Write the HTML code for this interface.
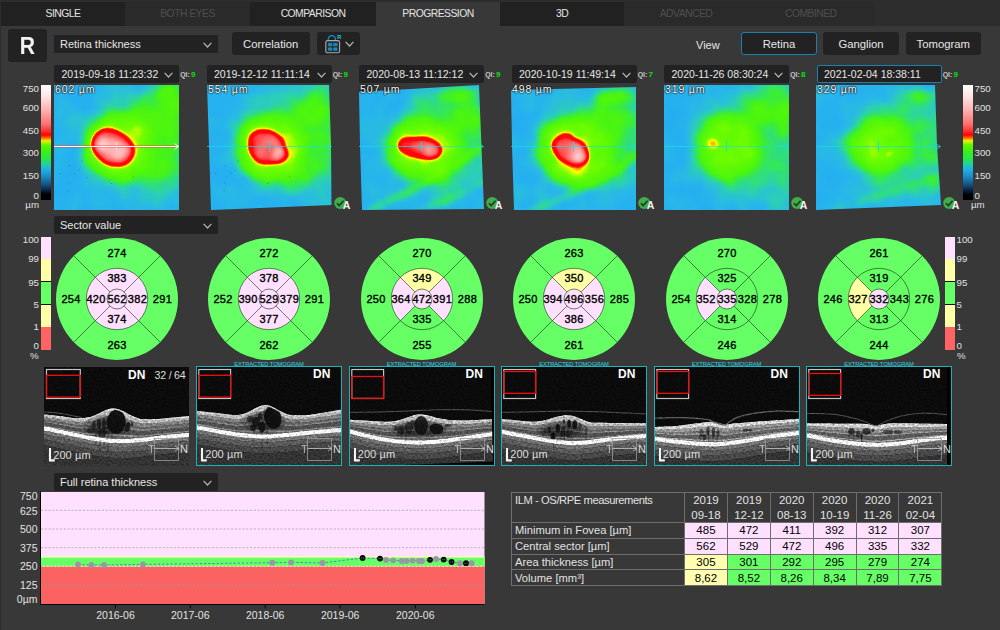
<!DOCTYPE html>
<html lang="en"><head><meta charset="utf-8"><title>Progression</title>
<style>
html,body{margin:0;padding:0}
body{width:1000px;height:630px;background:#383838;position:relative;overflow:hidden;font-family:'Liberation Sans', sans-serif;color:#e6e6e6;font-size:11px}
.a{position:absolute}
.tab{position:absolute;top:2px;height:24px;line-height:24px;text-align:center;font-size:10.4px;background:#212121;color:#e4e4e4;letter-spacing:-.55px}
.tab.dis{background:#2a2a2a;color:#4e4e4e}
.tab.act{background:#383838}
.dd{position:absolute;background:#222222;border-radius:2px;height:18px;line-height:18px;font-size:11px;color:#e6e6e6;box-sizing:border-box;padding-left:6px;white-space:nowrap}
.btn{position:absolute;background:#222222;border-radius:3px;height:23px;line-height:25px;font-size:11.3px;color:#e6e6e6;text-align:center;box-sizing:border-box;white-space:nowrap}
.chev{position:absolute;width:9px;height:6px}
.qi{position:absolute;font-size:6.9px;font-weight:bold;color:#c8c8c8;top:70px;line-height:9px;white-space:nowrap}
.qi b{color:#00e800;font-size:8px;margin-left:1.2px}
.um{position:absolute;top:84px;font-size:10.5px;line-height:11px;color:#fff;text-shadow:0 0 2px #000,0 0 1px #000,0 0 1px #000;white-space:nowrap;letter-spacing:.85px}
.sl{position:absolute;font-size:9.7px;line-height:10px;color:#e0e0e0;white-space:nowrap}
.ext{position:absolute;top:360.5px;width:146px;text-align:center;font-size:5.8px;line-height:7px;color:#27d6e2;white-space:nowrap;letter-spacing:-.1px}
.tomo{position:absolute;top:366px;height:100px;width:146px;box-sizing:border-box;background:#000;overflow:hidden}
.tomo.ex{border:1px solid #17b4bd}
.dn{position:absolute;font-weight:bold;font-size:12px;line-height:12px;color:#fff;top:2px}
.sc{position:absolute;font-size:11px;line-height:12px;color:#dedede;white-space:nowrap}
table{border-collapse:collapse;position:absolute;left:511px;top:492px;font-size:11.2px;color:#e2e2e2}
td{border:1px solid #6e6e6e;padding:0 0 0 3px;height:14.75px;line-height:14px;white-space:nowrap}
td.c{text-align:center;padding:0;color:#000;width:41.9px;font-size:11.5px}
td.h{text-align:center;padding:0;height:29px;line-height:14.5px;width:41.9px;vertical-align:top;font-size:11.5px}
td.p{background:#ffe1ff} td.y{background:#ffffaf} td.g{background:#66ff66}
</style></head><body>

<div class="a" style="left:0;top:0;width:1000px;height:25.5px;background:#2d2d2d"></div>
<div class="a" style="left:0;top:0;width:1.2px;height:630px;background:#2d2d2d"></div>
<div class="tab " style="left:1px;width:124px">SINGLE</div>
<div class="tab dis" style="left:125px;width:125px">BOTH EYES</div>
<div class="tab " style="left:250px;width:126px">COMPARISON</div>
<div class="tab act" style="left:376px;width:124px">PROGRESSION</div>
<div class="tab " style="left:500px;width:124px">3D</div>
<div class="tab dis" style="left:624px;width:124px">ADVANCED</div>
<div class="tab dis" style="left:748px;width:125.5px">COMBINED</div>
<div class="a" style="left:8px;top:29px;width:39px;height:33px;background:#222222;border-radius:3px;text-align:center;line-height:35px;font-size:23.5px;font-weight:bold;color:#f2f2f2"><span style="display:inline-block;transform:scaleX(.9)">R</span></div>
<div class="dd" style="left:54px;top:35px;width:164px">Retina thickness</div>
<svg class="chev" style="left:203px;top:41.5px" viewBox="0 0 9 6"><path d="M0.6 0.8 L4.5 5 L8.4 0.8" fill="none" stroke="#b4b4b4" stroke-width="1.2"/></svg>
<div class="btn" style="left:231.5px;top:32px;width:78.5px">Correlation</div>
<div class="btn" style="left:317px;top:32px;width:43px"></div>
<svg class="a" style="left:323px;top:33px" width="22" height="22" viewBox="0 0 22 22">
<path d="M5.2 8 V6.2 A3.6 3.6 0 0 1 12.4 6.2 V8" fill="none" stroke="#1c8fc0" stroke-width="1.2"/>
<rect x="2.8" y="7.6" width="13.8" height="12.2" rx="1.6" fill="#2a2a2a" stroke="#a8a8a8" stroke-width="1.1"/>
<rect x="5" y="10" width="4.2" height="3.3" rx=".6" fill="#1789bf"/><rect x="10.2" y="10" width="4.2" height="3.3" rx=".6" fill="#1789bf"/>
<rect x="5" y="14.4" width="4.2" height="3.3" rx=".6" fill="#1789bf"/><rect x="10.2" y="14.4" width="4.2" height="3.3" rx=".6" fill="#1789bf"/>
<text x="14.2" y="6.3" font-family="Liberation Sans, sans-serif" font-size="5.6" font-weight="bold" fill="#22c8dc">R</text>
</svg>
<svg class="chev" style="left:344.5px;top:40.5px" viewBox="0 0 9 6"><path d="M0.6 0.8 L4.5 5 L8.4 0.8" fill="none" stroke="#b4b4b4" stroke-width="1.2"/></svg>
<div class="a" style="left:696px;top:37.5px;font-size:11px;line-height:14px;color:#e6e6e6">View</div>
<div class="btn" style="left:741px;top:32px;width:76px;border:1px solid #1b7fb0;line-height:23px">Retina</div>
<div class="btn" style="left:823px;top:32px;width:76px">Ganglion</div>
<div class="btn" style="left:905.5px;top:32px;width:75.5px">Tomogram</div>
<div class="dd" style="left:54px;top:65px;width:125px;padding-left:7.5px;font-size:10.5px">2019-09-18 11:23:32</div>
<svg class="chev" style="left:164px;top:71.5px" viewBox="0 0 9 6"><path d="M0.6 0.8 L4.5 5 L8.4 0.8" fill="none" stroke="#b4b4b4" stroke-width="1.2"/></svg>
<div class="qi" style="left:180.2px">QI:<b>9</b></div>
<div class="dd" style="left:206.5px;top:65px;width:125px;padding-left:7.5px;font-size:10.5px">2019-12-12 11:11:14</div>
<svg class="chev" style="left:316.5px;top:71.5px" viewBox="0 0 9 6"><path d="M0.6 0.8 L4.5 5 L8.4 0.8" fill="none" stroke="#b4b4b4" stroke-width="1.2"/></svg>
<div class="qi" style="left:332.7px">QI:<b>9</b></div>
<div class="dd" style="left:359px;top:65px;width:125px;padding-left:7.5px;font-size:10.5px">2020-08-13 11:12:12</div>
<svg class="chev" style="left:469px;top:71.5px" viewBox="0 0 9 6"><path d="M0.6 0.8 L4.5 5 L8.4 0.8" fill="none" stroke="#b4b4b4" stroke-width="1.2"/></svg>
<div class="qi" style="left:485.2px">QI:<b>9</b></div>
<div class="dd" style="left:511.5px;top:65px;width:125px;padding-left:7.5px;font-size:10.5px">2020-10-19 11:49:14</div>
<svg class="chev" style="left:621.5px;top:71.5px" viewBox="0 0 9 6"><path d="M0.6 0.8 L4.5 5 L8.4 0.8" fill="none" stroke="#b4b4b4" stroke-width="1.2"/></svg>
<div class="qi" style="left:637.7px">QI:<b>7</b></div>
<div class="dd" style="left:664px;top:65px;width:125px;padding-left:7.5px;font-size:10.5px">2020-11-26 08:30:24</div>
<svg class="chev" style="left:774px;top:71.5px" viewBox="0 0 9 6"><path d="M0.6 0.8 L4.5 5 L8.4 0.8" fill="none" stroke="#b4b4b4" stroke-width="1.2"/></svg>
<div class="qi" style="left:790.2px">QI:<b>8</b></div>
<div class="dd" style="left:816.5px;top:65px;width:125px;padding-left:6.5px;font-size:10.5px;border:1px solid #1b7fb0;line-height:16px">2021-02-04 18:38:11</div>
<div class="qi" style="left:942.7px">QI:<b>9</b></div>
<div class="a" style="left:41px;top:85px;width:10px;height:114.5px;background:linear-gradient(to bottom,#ffffff 0%,#ffe4e4 10%,#ffb0b0 22%,#ff7070 34%,#ff3030 40%,#ff0000 43.5%,#ff8000 46.5%,#f0f000 48.5%,#60f800 52%,#38f018 58%,#28e848 64%,#20d0a0 69%,#20b0e8 73.5%,#1c90c8 79%,#145888 86%,#0a2848 91%,#000008 95%,#000 100%)"></div>
<div class="a" style="left:962.5px;top:85px;width:10px;height:114.5px;background:linear-gradient(to bottom,#ffffff 0%,#ffe4e4 10%,#ffb0b0 22%,#ff7070 34%,#ff3030 40%,#ff0000 43.5%,#ff8000 46.5%,#f0f000 48.5%,#60f800 52%,#38f018 58%,#28e848 64%,#20d0a0 69%,#20b0e8 73.5%,#1c90c8 79%,#145888 86%,#0a2848 91%,#000008 95%,#000 100%)"></div>
<div class="sl" style="left:10px;width:29px;text-align:right;top:84px">750</div>
<div class="sl" style="left:974.5px;top:84px">750</div>
<div class="sl" style="left:10px;width:29px;text-align:right;top:103px">600</div>
<div class="sl" style="left:974.5px;top:103px">600</div>
<div class="sl" style="left:10px;width:29px;text-align:right;top:125.5px">450</div>
<div class="sl" style="left:974.5px;top:125.5px">450</div>
<div class="sl" style="left:10px;width:29px;text-align:right;top:148px">300</div>
<div class="sl" style="left:974.5px;top:148px">300</div>
<div class="sl" style="left:10px;width:29px;text-align:right;top:170.5px">150</div>
<div class="sl" style="left:974.5px;top:170.5px">150</div>
<div class="sl" style="left:10px;width:29px;text-align:right;top:190.5px">0</div>
<div class="sl" style="left:974.5px;top:190.5px">0</div>
<div class="sl" style="left:10px;width:29px;text-align:right;top:200px">µm</div>
<div class="sl" style="left:971px;top:200px">µm</div>
<svg width="0" height="0" style="position:absolute"><defs>
<filter id="cm0" x="0" y="0" width="1" height="1" color-interpolation-filters="sRGB"><feTurbulence type="fractalNoise" baseFrequency=".04" numOctaves="2" seed="3" result="n"/><feColorMatrix in="n" type="matrix" values=".2 0 0 0 0  .2 0 0 0 0  .2 0 0 0 0  0 0 0 0 1" result="ng"/><feComposite in="SourceGraphic" in2="ng" operator="arithmetic" k1="0" k2="1" k3="1" k4="-.1"/><feComponentTransfer><feFuncR type="table" tableValues="0.14 0.141 0.142 0.143 0.144 0.145 0.146 0.147 0.148 0.149 0.15 0.152 0.153 0.155 0.157 0.158 0.16 0.162 0.163 0.165 0.167 0.168 0.17 0.173 0.177 0.18 0.183 0.187 0.19 0.198 0.206 0.214 0.222 0.23 0.242 0.254 0.266 0.278 0.29 0.296 0.302 0.307 0.313 0.319 0.325 0.331 0.337 0.343 0.348 0.354 0.36 0.371 0.383 0.394 0.405 0.416 0.428 0.439 0.45 0.512 0.575 0.637 0.7 0.8 0.9 1 1 1 1 1 1 1 1 1 1 1 1 1 1 1 1 1 1 1 1 1 1 1 1 1 1 1 1 1 1 1 1 1 1 1 1"/><feFuncG type="table" tableValues="0.67 0.673 0.676 0.679 0.682 0.685 0.688 0.691 0.694 0.697 0.7 0.707 0.713 0.72 0.727 0.733 0.74 0.752 0.763 0.775 0.787 0.798 0.81 0.822 0.833 0.845 0.857 0.868 0.88 0.89 0.9 0.91 0.92 0.93 0.936 0.942 0.948 0.954 0.96 0.962 0.963 0.965 0.967 0.968 0.97 0.972 0.973 0.975 0.977 0.978 0.98 0.981 0.983 0.984 0.985 0.986 0.988 0.989 0.99 0.992 0.995 0.998 1 1 1 1 0.833 0.667 0.5 0.347 0.193 0.04 0.039 0.038 0.037 0.036 0.035 0.035 0.034 0.033 0.032 0.031 0.03 0.084 0.138 0.192 0.246 0.3 0.34 0.38 0.42 0.46 0.5 0.545 0.59 0.635 0.68 0.715 0.75 0.785 0.82"/><feFuncB type="table" tableValues="0.95 0.949 0.948 0.947 0.946 0.945 0.944 0.943 0.942 0.941 0.94 0.93 0.92 0.91 0.9 0.89 0.88 0.853 0.827 0.8 0.773 0.747 0.72 0.678 0.637 0.595 0.553 0.512 0.47 0.42 0.37 0.32 0.27 0.22 0.19 0.16 0.13 0.1 0.07 0.066 0.062 0.057 0.053 0.049 0.045 0.041 0.037 0.032 0.028 0.024 0.02 0.017 0.015 0.012 0.01 0.007 0.005 0.002 0 0 0 0 0 0 0 0 0 0 0 0 0 0 0.005 0.011 0.016 0.022 0.027 0.033 0.038 0.044 0.049 0.055 0.06 0.108 0.156 0.204 0.252 0.3 0.34 0.38 0.42 0.46 0.5 0.545 0.59 0.635 0.68 0.715 0.75 0.785 0.82"/></feComponentTransfer></filter>
<filter id="cm1" x="0" y="0" width="1" height="1" color-interpolation-filters="sRGB"><feTurbulence type="fractalNoise" baseFrequency=".04" numOctaves="2" seed="10" result="n"/><feColorMatrix in="n" type="matrix" values=".2 0 0 0 0  .2 0 0 0 0  .2 0 0 0 0  0 0 0 0 1" result="ng"/><feComposite in="SourceGraphic" in2="ng" operator="arithmetic" k1="0" k2="1" k3="1" k4="-.1"/><feComponentTransfer><feFuncR type="table" tableValues="0.14 0.141 0.142 0.143 0.144 0.145 0.146 0.147 0.148 0.149 0.15 0.152 0.153 0.155 0.157 0.158 0.16 0.162 0.163 0.165 0.167 0.168 0.17 0.173 0.177 0.18 0.183 0.187 0.19 0.198 0.206 0.214 0.222 0.23 0.242 0.254 0.266 0.278 0.29 0.296 0.302 0.307 0.313 0.319 0.325 0.331 0.337 0.343 0.348 0.354 0.36 0.371 0.383 0.394 0.405 0.416 0.428 0.439 0.45 0.512 0.575 0.637 0.7 0.8 0.9 1 1 1 1 1 1 1 1 1 1 1 1 1 1 1 1 1 1 1 1 1 1 1 1 1 1 1 1 1 1 1 1 1 1 1 1"/><feFuncG type="table" tableValues="0.67 0.673 0.676 0.679 0.682 0.685 0.688 0.691 0.694 0.697 0.7 0.707 0.713 0.72 0.727 0.733 0.74 0.752 0.763 0.775 0.787 0.798 0.81 0.822 0.833 0.845 0.857 0.868 0.88 0.89 0.9 0.91 0.92 0.93 0.936 0.942 0.948 0.954 0.96 0.962 0.963 0.965 0.967 0.968 0.97 0.972 0.973 0.975 0.977 0.978 0.98 0.981 0.983 0.984 0.985 0.986 0.988 0.989 0.99 0.992 0.995 0.998 1 1 1 1 0.833 0.667 0.5 0.347 0.193 0.04 0.039 0.038 0.037 0.036 0.035 0.035 0.034 0.033 0.032 0.031 0.03 0.084 0.138 0.192 0.246 0.3 0.34 0.38 0.42 0.46 0.5 0.545 0.59 0.635 0.68 0.715 0.75 0.785 0.82"/><feFuncB type="table" tableValues="0.95 0.949 0.948 0.947 0.946 0.945 0.944 0.943 0.942 0.941 0.94 0.93 0.92 0.91 0.9 0.89 0.88 0.853 0.827 0.8 0.773 0.747 0.72 0.678 0.637 0.595 0.553 0.512 0.47 0.42 0.37 0.32 0.27 0.22 0.19 0.16 0.13 0.1 0.07 0.066 0.062 0.057 0.053 0.049 0.045 0.041 0.037 0.032 0.028 0.024 0.02 0.017 0.015 0.012 0.01 0.007 0.005 0.002 0 0 0 0 0 0 0 0 0 0 0 0 0 0 0.005 0.011 0.016 0.022 0.027 0.033 0.038 0.044 0.049 0.055 0.06 0.108 0.156 0.204 0.252 0.3 0.34 0.38 0.42 0.46 0.5 0.545 0.59 0.635 0.68 0.715 0.75 0.785 0.82"/></feComponentTransfer></filter>
<filter id="cm2" x="0" y="0" width="1" height="1" color-interpolation-filters="sRGB"><feTurbulence type="fractalNoise" baseFrequency=".04" numOctaves="2" seed="17" result="n"/><feColorMatrix in="n" type="matrix" values=".2 0 0 0 0  .2 0 0 0 0  .2 0 0 0 0  0 0 0 0 1" result="ng"/><feComposite in="SourceGraphic" in2="ng" operator="arithmetic" k1="0" k2="1" k3="1" k4="-.1"/><feComponentTransfer><feFuncR type="table" tableValues="0.14 0.141 0.142 0.143 0.144 0.145 0.146 0.147 0.148 0.149 0.15 0.152 0.153 0.155 0.157 0.158 0.16 0.162 0.163 0.165 0.167 0.168 0.17 0.173 0.177 0.18 0.183 0.187 0.19 0.198 0.206 0.214 0.222 0.23 0.242 0.254 0.266 0.278 0.29 0.296 0.302 0.307 0.313 0.319 0.325 0.331 0.337 0.343 0.348 0.354 0.36 0.371 0.383 0.394 0.405 0.416 0.428 0.439 0.45 0.512 0.575 0.637 0.7 0.8 0.9 1 1 1 1 1 1 1 1 1 1 1 1 1 1 1 1 1 1 1 1 1 1 1 1 1 1 1 1 1 1 1 1 1 1 1 1"/><feFuncG type="table" tableValues="0.67 0.673 0.676 0.679 0.682 0.685 0.688 0.691 0.694 0.697 0.7 0.707 0.713 0.72 0.727 0.733 0.74 0.752 0.763 0.775 0.787 0.798 0.81 0.822 0.833 0.845 0.857 0.868 0.88 0.89 0.9 0.91 0.92 0.93 0.936 0.942 0.948 0.954 0.96 0.962 0.963 0.965 0.967 0.968 0.97 0.972 0.973 0.975 0.977 0.978 0.98 0.981 0.983 0.984 0.985 0.986 0.988 0.989 0.99 0.992 0.995 0.998 1 1 1 1 0.833 0.667 0.5 0.347 0.193 0.04 0.039 0.038 0.037 0.036 0.035 0.035 0.034 0.033 0.032 0.031 0.03 0.084 0.138 0.192 0.246 0.3 0.34 0.38 0.42 0.46 0.5 0.545 0.59 0.635 0.68 0.715 0.75 0.785 0.82"/><feFuncB type="table" tableValues="0.95 0.949 0.948 0.947 0.946 0.945 0.944 0.943 0.942 0.941 0.94 0.93 0.92 0.91 0.9 0.89 0.88 0.853 0.827 0.8 0.773 0.747 0.72 0.678 0.637 0.595 0.553 0.512 0.47 0.42 0.37 0.32 0.27 0.22 0.19 0.16 0.13 0.1 0.07 0.066 0.062 0.057 0.053 0.049 0.045 0.041 0.037 0.032 0.028 0.024 0.02 0.017 0.015 0.012 0.01 0.007 0.005 0.002 0 0 0 0 0 0 0 0 0 0 0 0 0 0 0.005 0.011 0.016 0.022 0.027 0.033 0.038 0.044 0.049 0.055 0.06 0.108 0.156 0.204 0.252 0.3 0.34 0.38 0.42 0.46 0.5 0.545 0.59 0.635 0.68 0.715 0.75 0.785 0.82"/></feComponentTransfer></filter>
<filter id="cm3" x="0" y="0" width="1" height="1" color-interpolation-filters="sRGB"><feTurbulence type="fractalNoise" baseFrequency=".04" numOctaves="2" seed="24" result="n"/><feColorMatrix in="n" type="matrix" values=".2 0 0 0 0  .2 0 0 0 0  .2 0 0 0 0  0 0 0 0 1" result="ng"/><feComposite in="SourceGraphic" in2="ng" operator="arithmetic" k1="0" k2="1" k3="1" k4="-.1"/><feComponentTransfer><feFuncR type="table" tableValues="0.14 0.141 0.142 0.143 0.144 0.145 0.146 0.147 0.148 0.149 0.15 0.152 0.153 0.155 0.157 0.158 0.16 0.162 0.163 0.165 0.167 0.168 0.17 0.173 0.177 0.18 0.183 0.187 0.19 0.198 0.206 0.214 0.222 0.23 0.242 0.254 0.266 0.278 0.29 0.296 0.302 0.307 0.313 0.319 0.325 0.331 0.337 0.343 0.348 0.354 0.36 0.371 0.383 0.394 0.405 0.416 0.428 0.439 0.45 0.512 0.575 0.637 0.7 0.8 0.9 1 1 1 1 1 1 1 1 1 1 1 1 1 1 1 1 1 1 1 1 1 1 1 1 1 1 1 1 1 1 1 1 1 1 1 1"/><feFuncG type="table" tableValues="0.67 0.673 0.676 0.679 0.682 0.685 0.688 0.691 0.694 0.697 0.7 0.707 0.713 0.72 0.727 0.733 0.74 0.752 0.763 0.775 0.787 0.798 0.81 0.822 0.833 0.845 0.857 0.868 0.88 0.89 0.9 0.91 0.92 0.93 0.936 0.942 0.948 0.954 0.96 0.962 0.963 0.965 0.967 0.968 0.97 0.972 0.973 0.975 0.977 0.978 0.98 0.981 0.983 0.984 0.985 0.986 0.988 0.989 0.99 0.992 0.995 0.998 1 1 1 1 0.833 0.667 0.5 0.347 0.193 0.04 0.039 0.038 0.037 0.036 0.035 0.035 0.034 0.033 0.032 0.031 0.03 0.084 0.138 0.192 0.246 0.3 0.34 0.38 0.42 0.46 0.5 0.545 0.59 0.635 0.68 0.715 0.75 0.785 0.82"/><feFuncB type="table" tableValues="0.95 0.949 0.948 0.947 0.946 0.945 0.944 0.943 0.942 0.941 0.94 0.93 0.92 0.91 0.9 0.89 0.88 0.853 0.827 0.8 0.773 0.747 0.72 0.678 0.637 0.595 0.553 0.512 0.47 0.42 0.37 0.32 0.27 0.22 0.19 0.16 0.13 0.1 0.07 0.066 0.062 0.057 0.053 0.049 0.045 0.041 0.037 0.032 0.028 0.024 0.02 0.017 0.015 0.012 0.01 0.007 0.005 0.002 0 0 0 0 0 0 0 0 0 0 0 0 0 0 0.005 0.011 0.016 0.022 0.027 0.033 0.038 0.044 0.049 0.055 0.06 0.108 0.156 0.204 0.252 0.3 0.34 0.38 0.42 0.46 0.5 0.545 0.59 0.635 0.68 0.715 0.75 0.785 0.82"/></feComponentTransfer></filter>
<filter id="cm4" x="0" y="0" width="1" height="1" color-interpolation-filters="sRGB"><feTurbulence type="fractalNoise" baseFrequency=".04" numOctaves="2" seed="31" result="n"/><feColorMatrix in="n" type="matrix" values=".2 0 0 0 0  .2 0 0 0 0  .2 0 0 0 0  0 0 0 0 1" result="ng"/><feComposite in="SourceGraphic" in2="ng" operator="arithmetic" k1="0" k2="1" k3="1" k4="-.1"/><feComponentTransfer><feFuncR type="table" tableValues="0.14 0.141 0.142 0.143 0.144 0.145 0.146 0.147 0.148 0.149 0.15 0.152 0.153 0.155 0.157 0.158 0.16 0.162 0.163 0.165 0.167 0.168 0.17 0.173 0.177 0.18 0.183 0.187 0.19 0.198 0.206 0.214 0.222 0.23 0.242 0.254 0.266 0.278 0.29 0.296 0.302 0.307 0.313 0.319 0.325 0.331 0.337 0.343 0.348 0.354 0.36 0.371 0.383 0.394 0.405 0.416 0.428 0.439 0.45 0.512 0.575 0.637 0.7 0.8 0.9 1 1 1 1 1 1 1 1 1 1 1 1 1 1 1 1 1 1 1 1 1 1 1 1 1 1 1 1 1 1 1 1 1 1 1 1"/><feFuncG type="table" tableValues="0.67 0.673 0.676 0.679 0.682 0.685 0.688 0.691 0.694 0.697 0.7 0.707 0.713 0.72 0.727 0.733 0.74 0.752 0.763 0.775 0.787 0.798 0.81 0.822 0.833 0.845 0.857 0.868 0.88 0.89 0.9 0.91 0.92 0.93 0.936 0.942 0.948 0.954 0.96 0.962 0.963 0.965 0.967 0.968 0.97 0.972 0.973 0.975 0.977 0.978 0.98 0.981 0.983 0.984 0.985 0.986 0.988 0.989 0.99 0.992 0.995 0.998 1 1 1 1 0.833 0.667 0.5 0.347 0.193 0.04 0.039 0.038 0.037 0.036 0.035 0.035 0.034 0.033 0.032 0.031 0.03 0.084 0.138 0.192 0.246 0.3 0.34 0.38 0.42 0.46 0.5 0.545 0.59 0.635 0.68 0.715 0.75 0.785 0.82"/><feFuncB type="table" tableValues="0.95 0.949 0.948 0.947 0.946 0.945 0.944 0.943 0.942 0.941 0.94 0.93 0.92 0.91 0.9 0.89 0.88 0.853 0.827 0.8 0.773 0.747 0.72 0.678 0.637 0.595 0.553 0.512 0.47 0.42 0.37 0.32 0.27 0.22 0.19 0.16 0.13 0.1 0.07 0.066 0.062 0.057 0.053 0.049 0.045 0.041 0.037 0.032 0.028 0.024 0.02 0.017 0.015 0.012 0.01 0.007 0.005 0.002 0 0 0 0 0 0 0 0 0 0 0 0 0 0 0.005 0.011 0.016 0.022 0.027 0.033 0.038 0.044 0.049 0.055 0.06 0.108 0.156 0.204 0.252 0.3 0.34 0.38 0.42 0.46 0.5 0.545 0.59 0.635 0.68 0.715 0.75 0.785 0.82"/></feComponentTransfer></filter>
<filter id="cm5" x="0" y="0" width="1" height="1" color-interpolation-filters="sRGB"><feTurbulence type="fractalNoise" baseFrequency=".04" numOctaves="2" seed="38" result="n"/><feColorMatrix in="n" type="matrix" values=".2 0 0 0 0  .2 0 0 0 0  .2 0 0 0 0  0 0 0 0 1" result="ng"/><feComposite in="SourceGraphic" in2="ng" operator="arithmetic" k1="0" k2="1" k3="1" k4="-.1"/><feComponentTransfer><feFuncR type="table" tableValues="0.14 0.141 0.142 0.143 0.144 0.145 0.146 0.147 0.148 0.149 0.15 0.152 0.153 0.155 0.157 0.158 0.16 0.162 0.163 0.165 0.167 0.168 0.17 0.173 0.177 0.18 0.183 0.187 0.19 0.198 0.206 0.214 0.222 0.23 0.242 0.254 0.266 0.278 0.29 0.296 0.302 0.307 0.313 0.319 0.325 0.331 0.337 0.343 0.348 0.354 0.36 0.371 0.383 0.394 0.405 0.416 0.428 0.439 0.45 0.512 0.575 0.637 0.7 0.8 0.9 1 1 1 1 1 1 1 1 1 1 1 1 1 1 1 1 1 1 1 1 1 1 1 1 1 1 1 1 1 1 1 1 1 1 1 1"/><feFuncG type="table" tableValues="0.67 0.673 0.676 0.679 0.682 0.685 0.688 0.691 0.694 0.697 0.7 0.707 0.713 0.72 0.727 0.733 0.74 0.752 0.763 0.775 0.787 0.798 0.81 0.822 0.833 0.845 0.857 0.868 0.88 0.89 0.9 0.91 0.92 0.93 0.936 0.942 0.948 0.954 0.96 0.962 0.963 0.965 0.967 0.968 0.97 0.972 0.973 0.975 0.977 0.978 0.98 0.981 0.983 0.984 0.985 0.986 0.988 0.989 0.99 0.992 0.995 0.998 1 1 1 1 0.833 0.667 0.5 0.347 0.193 0.04 0.039 0.038 0.037 0.036 0.035 0.035 0.034 0.033 0.032 0.031 0.03 0.084 0.138 0.192 0.246 0.3 0.34 0.38 0.42 0.46 0.5 0.545 0.59 0.635 0.68 0.715 0.75 0.785 0.82"/><feFuncB type="table" tableValues="0.95 0.949 0.948 0.947 0.946 0.945 0.944 0.943 0.942 0.941 0.94 0.93 0.92 0.91 0.9 0.89 0.88 0.853 0.827 0.8 0.773 0.747 0.72 0.678 0.637 0.595 0.553 0.512 0.47 0.42 0.37 0.32 0.27 0.22 0.19 0.16 0.13 0.1 0.07 0.066 0.062 0.057 0.053 0.049 0.045 0.041 0.037 0.032 0.028 0.024 0.02 0.017 0.015 0.012 0.01 0.007 0.005 0.002 0 0 0 0 0 0 0 0 0 0 0 0 0 0 0.005 0.011 0.016 0.022 0.027 0.033 0.038 0.044 0.049 0.055 0.06 0.108 0.156 0.204 0.252 0.3 0.34 0.38 0.42 0.46 0.5 0.545 0.59 0.635 0.68 0.715 0.75 0.785 0.82"/></feComponentTransfer></filter>
<filter id="b1" x="-1" y="-1" width="3" height="3" color-interpolation-filters="sRGB"><feGaussianBlur stdDeviation="1"/></filter>
<filter id="b2" x="-1" y="-1" width="3" height="3" color-interpolation-filters="sRGB"><feGaussianBlur stdDeviation="2"/></filter>
<filter id="b3" x="-1" y="-1" width="3" height="3" color-interpolation-filters="sRGB"><feGaussianBlur stdDeviation="3"/></filter>
<filter id="b4" x="-1" y="-1" width="3" height="3" color-interpolation-filters="sRGB"><feGaussianBlur stdDeviation="4"/></filter>
<filter id="b6" x="-1" y="-1" width="3" height="3" color-interpolation-filters="sRGB"><feGaussianBlur stdDeviation="6"/></filter>
<filter id="b9" x="-1" y="-1" width="3" height="3" color-interpolation-filters="sRGB"><feGaussianBlur stdDeviation="9"/></filter>
<filter id="b12" x="-1" y="-1" width="3" height="3" color-interpolation-filters="sRGB"><feGaussianBlur stdDeviation="12"/></filter>
<filter id="b14" x="-1" y="-1" width="3" height="3" color-interpolation-filters="sRGB"><feGaussianBlur stdDeviation="14"/></filter>
</defs></svg>
<svg class="a" style="left:54px;top:85px" width="125" height="125" viewBox="0 0 125 125">
<g filter="url(#cm0)"><rect x="-5" y="-5" width="135" height="135" fill="rgb(26,26,26)"/>
<ellipse cx="86" cy="58" rx="54" ry="50" fill="#fff" opacity="0.22" filter="url(#b12)"/><ellipse cx="65" cy="62" rx="35" ry="32" fill="#fff" opacity="0.4" filter="url(#b6)"/><ellipse cx="110" cy="28" rx="24" ry="34" fill="#fff" opacity="0.14" filter="url(#b9)"/><ellipse cx="120" cy="12" rx="14" ry="18" fill="#fff" opacity="0.2" filter="url(#b6)"/><ellipse cx="112" cy="96" rx="20" ry="28" fill="#fff" opacity="0.08" filter="url(#b9)"/><ellipse cx="58.5" cy="62.5" rx="25.0" ry="20.0" fill="#fff" opacity="0.2" filter="url(#b3)" transform="rotate(32 58.5 62.5)"/><ellipse cx="58.5" cy="62.5" rx="21.5" ry="16.5" fill="#fff" opacity="0.5" filter="url(#b2)" transform="rotate(32 58.5 62.5)"/><ellipse cx="58.5" cy="62.5" rx="17.2" ry="13.200000000000001" fill="#fff" opacity="0.7" filter="url(#b3)" transform="rotate(32 58.5 62.5)"/>
</g>
<g fill="#304050" opacity=".35"><circle cx="15.3" cy="80.7" r=".7"/><circle cx="24.9" cy="85" r=".7"/><circle cx="5.6" cy="88.6" r=".7"/><circle cx="20.6" cy="88" r=".7"/><circle cx="15" cy="97.8" r=".7"/><circle cx="14.2" cy="105.7" r=".7"/><circle cx="57.4" cy="98.4" r=".7"/><circle cx="79.5" cy="92" r=".7"/><circle cx="28" cy="76" r=".7"/><circle cx="33" cy="93" r=".7"/></g>
<path d="M0 61.5 H124" stroke="#ff3030" stroke-width="2" opacity=".8"/>
<path d="M0 61.5 H124 M120.5 58.7 L124.5 61.5 L120.5 64.3" fill="none" stroke="#ffffff" stroke-width="1" opacity="1"/>
<path d="M62.5 56.5 V66.5" stroke="#ffd0d0" stroke-width="1" opacity=".9"/>
</svg>
<div class="um" style="left:55px">602 µm</div>
<svg class="a" style="left:207px;top:85px" width="125" height="125" viewBox="0 0 125 125">
<clipPath id="hc1"><polygon points="0,0 122,0 124,60 124.5,120 4,125 2,60"/></clipPath><g clip-path="url(#hc1)">
<g filter="url(#cm1)"><rect x="-5" y="-5" width="135" height="135" fill="rgb(26,26,26)"/>
<ellipse cx="84" cy="58" rx="54" ry="50" fill="#fff" opacity="0.22" filter="url(#b12)"/><ellipse cx="63" cy="64" rx="34" ry="32" fill="#fff" opacity="0.4" filter="url(#b6)"/><ellipse cx="108" cy="28" rx="24" ry="30" fill="#fff" opacity="0.14" filter="url(#b9)"/><ellipse cx="114" cy="14" rx="14" ry="16" fill="#fff" opacity="0.16" filter="url(#b6)"/><ellipse cx="110" cy="96" rx="18" ry="28" fill="#fff" opacity="0.08" filter="url(#b9)"/><ellipse cx="59" cy="62" rx="22.0" ry="19.5" fill="#fff" opacity="0.2" filter="url(#b3)" transform="rotate(25 59 62)"/><ellipse cx="59" cy="62" rx="18.5" ry="16" fill="#fff" opacity="0.5" filter="url(#b2)" transform="rotate(25 59 62)"/><ellipse cx="59" cy="62" rx="14.8" ry="12.8" fill="#fff" opacity="0.6" filter="url(#b3)" transform="rotate(25 59 62)"/><ellipse cx="72.5" cy="70" rx="7.5" ry="7.5" fill="#fff" opacity="0.55" filter="url(#b2)"/>
</g>
</g>
<g fill="#304050" opacity=".35"><circle cx="18.3" cy="80.7" r=".7"/><circle cx="27.9" cy="85" r=".7"/><circle cx="8.6" cy="88.6" r=".7"/><circle cx="23.6" cy="88" r=".7"/><circle cx="18" cy="97.8" r=".7"/><circle cx="17.2" cy="105.7" r=".7"/><circle cx="60.4" cy="98.4" r=".7"/><circle cx="82.5" cy="92" r=".7"/><circle cx="31" cy="76" r=".7"/><circle cx="36" cy="93" r=".7"/></g>
<path d="M0 61.5 H124 M120.5 58.7 L124.5 61.5 L120.5 64.3" fill="none" stroke="#18dcec" stroke-width="0.8" opacity="0.85"/>
<path d="M62.5 56.5 V66.5" stroke="#18dcec" stroke-width="1" opacity=".9"/>
</svg>
<div class="um" style="left:208px">554 µm</div>
<svg class="a" style="left:333px;top:196px" width="20" height="15" viewBox="0 0 20 15"><circle cx="7.2" cy="7.1" r="6" fill="#3fae49"/><path d="M3.9 7.2 L6.3 9.6 L10.6 4.8" fill="none" stroke="#2e2e2e" stroke-width="1.5"/><text x="9.7" y="13.2" font-family="Liberation Sans, sans-serif" font-size="10.5" font-weight="bold" fill="#f4f4f4">A</text></svg>
<svg class="a" style="left:359px;top:85px" width="125" height="125" viewBox="0 0 125 125">
<clipPath id="hc2"><polygon points="0,7 120,0 122,50 125,124 3,125 1,60"/></clipPath><g clip-path="url(#hc2)">
<g filter="url(#cm2)"><rect x="-5" y="-5" width="135" height="135" fill="rgb(26,26,26)"/>
<ellipse cx="82" cy="60" rx="54" ry="48" fill="#fff" opacity="0.22" filter="url(#b12)"/><ellipse cx="63" cy="64" rx="36" ry="29" fill="#fff" opacity="0.4" filter="url(#b6)"/><ellipse cx="104" cy="26" rx="24" ry="28" fill="#fff" opacity="0.14" filter="url(#b9)"/><ellipse cx="100" cy="10" rx="22" ry="6" fill="#fff" opacity="0.2" filter="url(#b4)"/><path d="M10 125 Q70 100 125 60" fill="none" stroke="#fff" stroke-width="6" opacity="0.22" filter="url(#b3)" stroke-linecap="round"/><path d="M60 125 Q100 112 125 96" fill="none" stroke="#fff" stroke-width="5" opacity="0.18" filter="url(#b3)" stroke-linecap="round"/><ellipse cx="60.5" cy="62.5" rx="24.5" ry="13.5" fill="#fff" opacity="0.2" filter="url(#b3)" transform="rotate(6 60.5 62.5)"/><ellipse cx="60.5" cy="62.5" rx="21" ry="10" fill="#fff" opacity="0.5" filter="url(#b2)" transform="rotate(6 60.5 62.5)"/><ellipse cx="60.5" cy="62.5" rx="10" ry="5.5" fill="#fff" opacity="0.55" filter="url(#b3)" transform="rotate(6 60.5 62.5)"/><ellipse cx="73" cy="66.5" rx="8.5" ry="7" fill="#fff" opacity="0.5" filter="url(#b2)"/>
</g>
</g>
<path d="M0 61.5 H124 M120.5 58.7 L124.5 61.5 L120.5 64.3" fill="none" stroke="#18dcec" stroke-width="0.8" opacity="0.85"/>
<path d="M62.5 56.5 V66.5" stroke="#18dcec" stroke-width="1" opacity=".9"/>
</svg>
<div class="um" style="left:360px">507 µm</div>
<svg class="a" style="left:485px;top:196px" width="20" height="15" viewBox="0 0 20 15"><circle cx="7.2" cy="7.1" r="6" fill="#3fae49"/><path d="M3.9 7.2 L6.3 9.6 L10.6 4.8" fill="none" stroke="#2e2e2e" stroke-width="1.5"/><text x="9.7" y="13.2" font-family="Liberation Sans, sans-serif" font-size="10.5" font-weight="bold" fill="#f4f4f4">A</text></svg>
<svg class="a" style="left:511px;top:85px" width="125" height="125" viewBox="0 0 125 125">
<clipPath id="hc3"><polygon points="0,5 125,2 125,125 3,125 1,60"/></clipPath><g clip-path="url(#hc3)">
<g filter="url(#cm3)"><rect x="-5" y="-5" width="135" height="135" fill="rgb(26,26,26)"/>
<ellipse cx="82" cy="60" rx="54" ry="48" fill="#fff" opacity="0.22" filter="url(#b12)"/><ellipse cx="64" cy="66" rx="38" ry="33" fill="#fff" opacity="0.4" filter="url(#b6)"/><ellipse cx="106" cy="26" rx="24" ry="28" fill="#fff" opacity="0.13" filter="url(#b9)"/><ellipse cx="104" cy="12" rx="22" ry="6" fill="#fff" opacity="0.18" filter="url(#b4)"/><path d="M20 125 Q90 100 125 70" fill="none" stroke="#fff" stroke-width="6" opacity="0.2" filter="url(#b3)" stroke-linecap="round"/><ellipse cx="59" cy="65.5" rx="22.5" ry="15.5" fill="#fff" opacity="0.2" filter="url(#b3)" transform="rotate(25 59 65.5)"/><ellipse cx="59" cy="65.5" rx="19" ry="12" fill="#fff" opacity="0.5" filter="url(#b2)" transform="rotate(25 59 65.5)"/><ellipse cx="59" cy="65.5" rx="15.200000000000001" ry="9.600000000000001" fill="#fff" opacity="0.58" filter="url(#b3)" transform="rotate(25 59 65.5)"/><ellipse cx="55" cy="51.5" rx="6.5" ry="3.2" fill="#fff" opacity="0.34" filter="url(#b2)"/><ellipse cx="70.5" cy="71.5" rx="6.5" ry="5.5" fill="#fff" opacity="0.5" filter="url(#b2)"/>
</g>
</g>
<path d="M0 61.5 H124 M120.5 58.7 L124.5 61.5 L120.5 64.3" fill="none" stroke="#18dcec" stroke-width="0.8" opacity="0.85"/>
<path d="M62.5 56.5 V66.5" stroke="#18dcec" stroke-width="1" opacity=".9"/>
</svg>
<div class="um" style="left:512px">498 µm</div>
<svg class="a" style="left:637px;top:196px" width="20" height="15" viewBox="0 0 20 15"><circle cx="7.2" cy="7.1" r="6" fill="#3fae49"/><path d="M3.9 7.2 L6.3 9.6 L10.6 4.8" fill="none" stroke="#2e2e2e" stroke-width="1.5"/><text x="9.7" y="13.2" font-family="Liberation Sans, sans-serif" font-size="10.5" font-weight="bold" fill="#f4f4f4">A</text></svg>
<svg class="a" style="left:664px;top:85px" width="125" height="125" viewBox="0 0 125 125">
<g filter="url(#cm4)"><rect x="-5" y="-5" width="135" height="135" fill="rgb(26,26,26)"/>
<ellipse cx="84" cy="60" rx="54" ry="50" fill="#fff" opacity="0.22" filter="url(#b12)"/><ellipse cx="64" cy="62" rx="31" ry="31" fill="#fff" opacity="0.35" filter="url(#b6)"/><ellipse cx="110" cy="16" rx="24" ry="20" fill="#fff" opacity="0.2" filter="url(#b6)"/><ellipse cx="121" cy="34" rx="7" ry="16" fill="#fff" opacity="0.2" filter="url(#b4)"/><ellipse cx="120" cy="110" rx="10" ry="20" fill="#fff" opacity="0.12" filter="url(#b6)"/><ellipse cx="47.5" cy="59" rx="7.2" ry="6.6" fill="#fff" opacity="0.3" filter="url(#b2)"/><ellipse cx="47.5" cy="59.3" rx="3.4" ry="3" fill="#fff" opacity="0.05" filter="url(#b1)"/>
</g>
<path d="M0 61.5 H124 M120.5 58.7 L124.5 61.5 L120.5 64.3" fill="none" stroke="#18dcec" stroke-width="0.8" opacity="0.85"/>
<path d="M62.5 56.5 V66.5" stroke="#18dcec" stroke-width="1" opacity=".9"/>
</svg>
<div class="um" style="left:665px">319 µm</div>
<svg class="a" style="left:790px;top:196px" width="20" height="15" viewBox="0 0 20 15"><circle cx="7.2" cy="7.1" r="6" fill="#3fae49"/><path d="M3.9 7.2 L6.3 9.6 L10.6 4.8" fill="none" stroke="#2e2e2e" stroke-width="1.5"/><text x="9.7" y="13.2" font-family="Liberation Sans, sans-serif" font-size="10.5" font-weight="bold" fill="#f4f4f4">A</text></svg>
<svg class="a" style="left:816px;top:85px" width="125" height="125" viewBox="0 0 125 125">
<clipPath id="hc5"><polygon points="0,0 119,0 121,60 125,120 0,125"/></clipPath><g clip-path="url(#hc5)">
<g filter="url(#cm5)"><rect x="-5" y="-5" width="135" height="135" fill="rgb(26,26,26)"/>
<ellipse cx="82" cy="60" rx="54" ry="48" fill="#fff" opacity="0.22" filter="url(#b12)"/><ellipse cx="63" cy="61" rx="30" ry="25" fill="#fff" opacity="0.35" filter="url(#b6)"/><ellipse cx="108" cy="10" rx="18" ry="6" fill="#fff" opacity="0.25" filter="url(#b4)"/><path d="M20 125 Q80 105 125 90" fill="none" stroke="#fff" stroke-width="5" opacity="0.16" filter="url(#b3)" stroke-linecap="round"/><ellipse cx="118" cy="100" rx="8" ry="10" fill="#fff" opacity="0.2" filter="url(#b4)"/><ellipse cx="73.5" cy="69" rx="4.5" ry="2.6" fill="#fff" opacity="0.15" filter="url(#b1)" transform="rotate(-35 73.5 69)"/>
</g>
</g>
<path d="M0 61.5 H124 M120.5 58.7 L124.5 61.5 L120.5 64.3" fill="none" stroke="#18dcec" stroke-width="0.8" opacity="0.85"/>
<path d="M62.5 56.5 V66.5" stroke="#18dcec" stroke-width="1" opacity=".9"/>
</svg>
<div class="um" style="left:817px">329 µm</div>
<svg class="a" style="left:942px;top:196px" width="20" height="15" viewBox="0 0 20 15"><circle cx="7.2" cy="7.1" r="6" fill="#3fae49"/><path d="M3.9 7.2 L6.3 9.6 L10.6 4.8" fill="none" stroke="#2e2e2e" stroke-width="1.5"/><text x="9.7" y="13.2" font-family="Liberation Sans, sans-serif" font-size="10.5" font-weight="bold" fill="#f4f4f4">A</text></svg>
<div class="dd" style="left:54px;top:216px;width:164px">Sector value</div>
<svg class="chev" style="left:203px;top:222.5px" viewBox="0 0 9 6"><path d="M0.6 0.8 L4.5 5 L8.4 0.8" fill="none" stroke="#b4b4b4" stroke-width="1.2"/></svg>
<div class="a" style="left:41px;top:237px;width:10px;height:22px;background:#ffe1ff"></div>
<div class="a" style="left:41px;top:259px;width:10px;height:22.69999999999999px;background:#ffffa5"></div>
<div class="a" style="left:41px;top:281.7px;width:10px;height:22.80000000000001px;background:#66ff66"></div>
<div class="a" style="left:41px;top:304.5px;width:10px;height:22.5px;background:#ffffa5"></div>
<div class="a" style="left:41px;top:327px;width:10px;height:22.5px;background:#ff6363"></div>
<div class="a" style="left:41px;top:281.2px;width:10px;height:1px;background:#101010"></div>
<div class="a" style="left:41px;top:303.6px;width:10px;height:1px;background:#101010"></div>
<div class="a" style="left:945px;top:237px;width:10px;height:22px;background:#ffe1ff"></div>
<div class="a" style="left:945px;top:259px;width:10px;height:22.69999999999999px;background:#ffffa5"></div>
<div class="a" style="left:945px;top:281.7px;width:10px;height:22.80000000000001px;background:#66ff66"></div>
<div class="a" style="left:945px;top:304.5px;width:10px;height:22.5px;background:#ffffa5"></div>
<div class="a" style="left:945px;top:327px;width:10px;height:22.5px;background:#ff6363"></div>
<div class="a" style="left:945px;top:281.2px;width:10px;height:1px;background:#101010"></div>
<div class="a" style="left:945px;top:303.6px;width:10px;height:1px;background:#101010"></div>
<div class="sl" style="left:10px;width:29px;text-align:right;top:235px">100</div>
<div class="sl" style="left:956.5px;top:235px">100</div>
<div class="sl" style="left:10px;width:29px;text-align:right;top:254px">99</div>
<div class="sl" style="left:956.5px;top:254px">99</div>
<div class="sl" style="left:10px;width:29px;text-align:right;top:277.5px">95</div>
<div class="sl" style="left:956.5px;top:277.5px">95</div>
<div class="sl" style="left:10px;width:29px;text-align:right;top:299.5px">5</div>
<div class="sl" style="left:956.5px;top:299.5px">5</div>
<div class="sl" style="left:10px;width:29px;text-align:right;top:322px">1</div>
<div class="sl" style="left:956.5px;top:322px">1</div>
<div class="sl" style="left:10px;width:29px;text-align:right;top:341px">0</div>
<div class="sl" style="left:956.5px;top:341px">0</div>
<div class="sl" style="left:30px;top:350.5px">%</div>
<div class="sl" style="left:957px;top:350.5px">%</div>
<svg class="a" style="left:54.5px;top:237px" width="124" height="124" viewBox="-62 -62 124 124">
<circle r="61" fill="#66ff66"/>
<path d="M-21.71 -21.71 A30.7 30.7 0 0 1 21.71 -21.71 L7.07 -7.07 A10 10 0 0 0 -7.07 -7.07 Z" fill="#ffe1ff"/>
<path d="M21.71 -21.71 A30.7 30.7 0 0 1 21.71 21.71 L7.07 7.07 A10 10 0 0 0 7.07 -7.07 Z" fill="#ffe1ff"/>
<path d="M21.71 21.71 A30.7 30.7 0 0 1 -21.71 21.71 L-7.07 7.07 A10 10 0 0 0 7.07 7.07 Z" fill="#ffe1ff"/>
<path d="M-21.71 21.71 A30.7 30.7 0 0 1 -21.71 -21.71 L-7.07 -7.07 A10 10 0 0 0 -7.07 7.07 Z" fill="#ffe1ff"/>
<circle r="10" fill="#ffe1ff"/>
<g fill="none" stroke="#0a0a0a" stroke-width=".6" opacity=".85"><circle r="30.7"/><circle r="10"/>
<path d="M7.07 7.07 L43.13 43.13M7.07 -7.07 L43.13 -43.13M-7.07 7.07 L-43.13 43.13M-7.07 -7.07 L-43.13 -43.13"/></g>
<g font-family="Liberation Sans, sans-serif" font-size="11" fill="#000" stroke="#000" stroke-width=".38" text-anchor="middle" letter-spacing=".3">
<text x="0" y="-42.4">274</text>
<text x="45.5" y="3.9">291</text>
<text x="0" y="49.699999999999996">263</text>
<text x="-46" y="3.9">254</text>
<text x="0" y="-17.1">383</text>
<text x="20.5" y="3.9">382</text>
<text x="0" y="24.099999999999998">374</text>
<text x="-21" y="3.9">420</text>
<text x="0" y="3.9">562</text>
</g></svg>
<svg class="a" style="left:207px;top:237px" width="124" height="124" viewBox="-62 -62 124 124">
<circle r="61" fill="#66ff66"/>
<path d="M-21.71 -21.71 A30.7 30.7 0 0 1 21.71 -21.71 L7.07 -7.07 A10 10 0 0 0 -7.07 -7.07 Z" fill="#ffe1ff"/>
<path d="M21.71 -21.71 A30.7 30.7 0 0 1 21.71 21.71 L7.07 7.07 A10 10 0 0 0 7.07 -7.07 Z" fill="#ffe1ff"/>
<path d="M21.71 21.71 A30.7 30.7 0 0 1 -21.71 21.71 L-7.07 7.07 A10 10 0 0 0 7.07 7.07 Z" fill="#ffe1ff"/>
<path d="M-21.71 21.71 A30.7 30.7 0 0 1 -21.71 -21.71 L-7.07 -7.07 A10 10 0 0 0 -7.07 7.07 Z" fill="#ffe1ff"/>
<circle r="10" fill="#ffe1ff"/>
<g fill="none" stroke="#0a0a0a" stroke-width=".6" opacity=".85"><circle r="30.7"/><circle r="10"/>
<path d="M7.07 7.07 L43.13 43.13M7.07 -7.07 L43.13 -43.13M-7.07 7.07 L-43.13 43.13M-7.07 -7.07 L-43.13 -43.13"/></g>
<g font-family="Liberation Sans, sans-serif" font-size="11" fill="#000" stroke="#000" stroke-width=".38" text-anchor="middle" letter-spacing=".3">
<text x="0" y="-42.4">272</text>
<text x="45.5" y="3.9">291</text>
<text x="0" y="49.699999999999996">262</text>
<text x="-46" y="3.9">252</text>
<text x="0" y="-17.1">378</text>
<text x="20.5" y="3.9">379</text>
<text x="0" y="24.099999999999998">377</text>
<text x="-21" y="3.9">390</text>
<text x="0" y="3.9">529</text>
</g></svg>
<svg class="a" style="left:359.5px;top:237px" width="124" height="124" viewBox="-62 -62 124 124">
<circle r="61" fill="#66ff66"/>
<path d="M-21.71 -21.71 A30.7 30.7 0 0 1 21.71 -21.71 L7.07 -7.07 A10 10 0 0 0 -7.07 -7.07 Z" fill="#ffffa5"/>
<path d="M21.71 -21.71 A30.7 30.7 0 0 1 21.71 21.71 L7.07 7.07 A10 10 0 0 0 7.07 -7.07 Z" fill="#ffe1ff"/>
<path d="M-21.71 21.71 A30.7 30.7 0 0 1 -21.71 -21.71 L-7.07 -7.07 A10 10 0 0 0 -7.07 7.07 Z" fill="#ffe1ff"/>
<circle r="10" fill="#ffe1ff"/>
<g fill="none" stroke="#0a0a0a" stroke-width=".6" opacity=".85"><circle r="30.7"/><circle r="10"/>
<path d="M7.07 7.07 L43.13 43.13M7.07 -7.07 L43.13 -43.13M-7.07 7.07 L-43.13 43.13M-7.07 -7.07 L-43.13 -43.13"/></g>
<g font-family="Liberation Sans, sans-serif" font-size="11" fill="#000" stroke="#000" stroke-width=".38" text-anchor="middle" letter-spacing=".3">
<text x="0" y="-42.4">270</text>
<text x="45.5" y="3.9">288</text>
<text x="0" y="49.699999999999996">255</text>
<text x="-46" y="3.9">250</text>
<text x="0" y="-17.1">349</text>
<text x="20.5" y="3.9">391</text>
<text x="0" y="24.099999999999998">335</text>
<text x="-21" y="3.9">364</text>
<text x="0" y="3.9">472</text>
</g></svg>
<svg class="a" style="left:512px;top:237px" width="124" height="124" viewBox="-62 -62 124 124">
<circle r="61" fill="#66ff66"/>
<path d="M-21.71 -21.71 A30.7 30.7 0 0 1 21.71 -21.71 L7.07 -7.07 A10 10 0 0 0 -7.07 -7.07 Z" fill="#ffffa5"/>
<path d="M21.71 -21.71 A30.7 30.7 0 0 1 21.71 21.71 L7.07 7.07 A10 10 0 0 0 7.07 -7.07 Z" fill="#ffe1ff"/>
<path d="M21.71 21.71 A30.7 30.7 0 0 1 -21.71 21.71 L-7.07 7.07 A10 10 0 0 0 7.07 7.07 Z" fill="#ffe1ff"/>
<path d="M-21.71 21.71 A30.7 30.7 0 0 1 -21.71 -21.71 L-7.07 -7.07 A10 10 0 0 0 -7.07 7.07 Z" fill="#ffe1ff"/>
<circle r="10" fill="#ffe1ff"/>
<g fill="none" stroke="#0a0a0a" stroke-width=".6" opacity=".85"><circle r="30.7"/><circle r="10"/>
<path d="M7.07 7.07 L43.13 43.13M7.07 -7.07 L43.13 -43.13M-7.07 7.07 L-43.13 43.13M-7.07 -7.07 L-43.13 -43.13"/></g>
<g font-family="Liberation Sans, sans-serif" font-size="11" fill="#000" stroke="#000" stroke-width=".38" text-anchor="middle" letter-spacing=".3">
<text x="0" y="-42.4">263</text>
<text x="45.5" y="3.9">285</text>
<text x="0" y="49.699999999999996">261</text>
<text x="-46" y="3.9">250</text>
<text x="0" y="-17.1">350</text>
<text x="20.5" y="3.9">356</text>
<text x="0" y="24.099999999999998">386</text>
<text x="-21" y="3.9">394</text>
<text x="0" y="3.9">496</text>
</g></svg>
<svg class="a" style="left:664.5px;top:237px" width="124" height="124" viewBox="-62 -62 124 124">
<circle r="61" fill="#66ff66"/>
<path d="M-21.71 21.71 A30.7 30.7 0 0 1 -21.71 -21.71 L-7.07 -7.07 A10 10 0 0 0 -7.07 7.07 Z" fill="#ffe1ff"/>
<circle r="10" fill="#ffe1ff"/>
<g fill="none" stroke="#0a0a0a" stroke-width=".6" opacity=".85"><circle r="30.7"/><circle r="10"/>
<path d="M7.07 7.07 L43.13 43.13M7.07 -7.07 L43.13 -43.13M-7.07 7.07 L-43.13 43.13M-7.07 -7.07 L-43.13 -43.13"/></g>
<g font-family="Liberation Sans, sans-serif" font-size="11" fill="#000" stroke="#000" stroke-width=".38" text-anchor="middle" letter-spacing=".3">
<text x="0" y="-42.4">270</text>
<text x="45.5" y="3.9">278</text>
<text x="0" y="49.699999999999996">246</text>
<text x="-46" y="3.9">254</text>
<text x="0" y="-17.1">325</text>
<text x="20.5" y="3.9">328</text>
<text x="0" y="24.099999999999998">314</text>
<text x="-21" y="3.9">352</text>
<text x="0" y="3.9">335</text>
</g></svg>
<svg class="a" style="left:817px;top:237px" width="124" height="124" viewBox="-62 -62 124 124">
<circle r="61" fill="#66ff66"/>
<path d="M-21.71 21.71 A30.7 30.7 0 0 1 -21.71 -21.71 L-7.07 -7.07 A10 10 0 0 0 -7.07 7.07 Z" fill="#ffffa5"/>
<circle r="10" fill="#ffe1ff"/>
<g fill="none" stroke="#0a0a0a" stroke-width=".6" opacity=".85"><circle r="30.7"/><circle r="10"/>
<path d="M7.07 7.07 L43.13 43.13M7.07 -7.07 L43.13 -43.13M-7.07 7.07 L-43.13 43.13M-7.07 -7.07 L-43.13 -43.13"/></g>
<g font-family="Liberation Sans, sans-serif" font-size="11" fill="#000" stroke="#000" stroke-width=".38" text-anchor="middle" letter-spacing=".3">
<text x="0" y="-42.4">261</text>
<text x="45.5" y="3.9">276</text>
<text x="0" y="49.699999999999996">244</text>
<text x="-46" y="3.9">246</text>
<text x="0" y="-17.1">319</text>
<text x="20.5" y="3.9">343</text>
<text x="0" y="24.099999999999998">313</text>
<text x="-21" y="3.9">327</text>
<text x="0" y="3.9">332</text>
</g></svg>
<svg width="0" height="0" style="position:absolute"><defs>
<filter id="sp" x="0" y="0" width="1" height="1" color-interpolation-filters="sRGB">
<feGaussianBlur in="SourceGraphic" stdDeviation=".6" result="bl"/>
<feTurbulence type="fractalNoise" baseFrequency=".45 .55" numOctaves="2" seed="7" result="n"/>
<feColorMatrix in="n" type="matrix" values="1.7 0 0 0 -.35  1.7 0 0 0 -.35  1.7 0 0 0 -.35  0 0 0 0 1" result="ng"/>
<feComposite in="bl" in2="ng" operator="arithmetic" k1=".52" k2=".74" k3=".018" k4="-.005" result="m"/>
<feGaussianBlur in="m" stdDeviation=".5"/>
</filter></defs></svg>
<div class="tomo" style="left:44px;width:145px;top:367px;height:99px">
<svg class="a" style="left:0px;top:-1px" width="146" height="100" viewBox="0 0 146 100">
<g filter="url(#sp)"><rect width="146" height="100" fill="#0a0a0a"/>
<polygon points="0,48.6 3,48.8 6,49.1 9,49.4 12,49.7 15,50.0 18,50.4 21,50.9 24,51.3 27,51.8 30,52.2 33,52.3 36,52.2 39,52.0 42,51.8 45,51.4 48,50.5 51,49.2 54,47.9 57,46.5 60,45.0 63,43.7 66,42.8 69,42.4 72,42.7 75,43.4 78,44.7 81,46.3 84,47.9 87,49.4 90,50.8 93,52.1 96,53.1 99,53.4 102,53.3 105,53.3 108,53.2 111,53.1 114,53.0 117,52.8 120,52.5 123,52.2 126,51.9 129,51.6 132,51.4 135,51.1 138,50.8 141,50.5 144,50.2 146,50.1 146,54.1 144,54.3 141,54.5 138,54.8 135,55.1 132,55.4 129,55.7 126,56.0 123,56.3 120,56.6 117,56.9 114,57.1 111,57.2 108,57.4 105,57.5 102,57.7 99,57.7 96,57.6 93,56.8 90,55.8 87,54.8 84,53.6 81,52.3 78,51.0 75,50.1 72,49.4 69,49.2 66,49.5 63,50.2 60,51.1 57,52.2 54,53.3 51,54.2 48,55.2 45,55.8 42,55.9 39,56.0 36,56.0 33,56.0 30,55.8 27,55.3 24,54.8 21,54.3 18,53.9 15,53.4 12,53.0 9,52.6 6,52.3 3,51.9 0,51.6" fill="rgb(182,182,182)"/>
<polygon points="0,51.3 3,51.6 6,52.0 9,52.3 12,52.7 15,53.1 18,53.6 21,54.0 24,54.5 27,55.0 30,55.5 33,55.7 36,55.7 39,55.7 42,55.6 45,55.5 48,54.9 51,53.9 54,53.0 57,51.9 60,50.8 63,49.9 66,49.2 69,48.9 72,49.1 75,49.8 78,50.7 81,52.0 84,53.3 87,54.5 90,55.5 93,56.5 96,57.3 99,57.4 102,57.4 105,57.2 108,57.1 111,56.9 114,56.8 117,56.6 120,56.3 123,56.0 126,55.7 129,55.4 132,55.1 135,54.8 138,54.5 141,54.2 144,54.0 146,53.8 146,57.5 144,57.6 141,57.9 138,58.2 135,58.5 132,58.8 129,59.0 126,59.3 123,59.6 120,59.9 117,60.2 114,60.5 111,60.7 108,60.9 105,61.1 102,61.3 99,61.4 96,61.3 93,60.8 90,60.1 87,59.3 84,58.4 81,57.5 78,56.5 75,55.7 72,55.3 69,55.0 66,55.2 63,55.7 60,56.4 57,57.1 54,57.8 51,58.5 48,59.1 45,59.4 42,59.4 39,59.3 36,59.2 33,59.1 30,58.7 27,58.2 24,57.7 21,57.2 18,56.7 15,56.2 12,55.7 9,55.3 6,54.8 3,54.4 0,54.1" fill="rgb(128,128,128)"/>
<polygon points="0,53.8 3,54.1 6,54.5 9,55.0 12,55.4 15,55.9 18,56.4 21,56.9 24,57.4 27,57.9 30,58.4 33,58.8 36,58.9 39,59.0 42,59.1 45,59.1 48,58.8 51,58.2 54,57.5 57,56.8 60,56.1 63,55.4 66,54.9 69,54.7 72,55.0 75,55.4 78,56.2 81,57.2 84,58.1 87,59.0 90,59.8 93,60.5 96,61.0 99,61.1 102,61.0 105,60.8 108,60.6 111,60.4 114,60.2 117,59.9 120,59.6 123,59.3 126,59.0 129,58.7 132,58.5 135,58.2 138,57.9 141,57.6 144,57.3 146,57.2 146,59.4 144,59.5 141,59.8 138,60.0 135,60.3 132,60.6 129,60.9 126,61.2 123,61.5 120,61.8 117,62.1 114,62.4 111,62.6 108,62.9 105,63.1 102,63.3 99,63.4 96,63.4 93,63.0 90,62.4 87,61.8 84,61.1 81,60.4 78,59.6 75,58.9 72,58.5 69,58.3 66,58.4 63,58.8 60,59.3 57,59.8 54,60.3 51,60.8 48,61.2 45,61.4 42,61.4 39,61.2 36,61.0 33,60.8 30,60.4 27,59.9 24,59.3 21,58.8 18,58.2 15,57.7 12,57.2 9,56.7 6,56.3 3,55.8 0,55.5" fill="rgb(98,98,98)"/>
<polygon points="0,55.2 3,55.5 6,56.0 9,56.4 12,56.9 15,57.4 18,57.9 21,58.5 24,59.0 27,59.6 30,60.1 33,60.5 36,60.7 39,60.9 42,61.1 45,61.1 48,60.9 51,60.5 54,60.0 57,59.5 60,59.0 63,58.5 66,58.1 69,58.0 72,58.2 75,58.6 78,59.3 81,60.1 84,60.8 87,61.5 90,62.1 93,62.7 96,63.1 99,63.1 102,63.0 105,62.8 108,62.6 111,62.3 114,62.1 117,61.8 120,61.5 123,61.2 126,60.9 129,60.6 132,60.3 135,60.0 138,59.7 141,59.5 144,59.2 146,59.1 146,61.1 144,61.2 141,61.5 138,61.7 135,62.0 132,62.3 129,62.6 126,62.9 123,63.2 120,63.5 117,63.8 114,64.1 111,64.4 108,64.6 105,64.9 102,65.1 99,65.3 96,65.3 93,65.0 90,64.6 87,64.1 84,63.6 81,62.9 78,62.3 75,61.7 72,61.4 69,61.2 66,61.3 63,61.6 60,61.9 57,62.3 54,62.6 51,62.9 48,63.2 45,63.3 42,63.1 39,62.9 36,62.6 33,62.3 30,61.9 27,61.3 24,60.8 21,60.2 18,59.6 15,59.1 12,58.6 9,58.0 6,57.5 3,57.1 0,56.7" fill="rgb(128,128,128)"/>
<polygon points="0,56.4 3,56.8 6,57.2 9,57.7 12,58.3 15,58.8 18,59.3 21,59.9 24,60.5 27,61.0 30,61.6 33,62.0 36,62.3 39,62.6 42,62.8 45,63.0 48,62.9 51,62.6 54,62.3 57,62.0 60,61.6 63,61.3 66,61.0 69,60.9 72,61.1 75,61.4 78,62.0 81,62.6 84,63.3 87,63.8 90,64.3 93,64.7 96,65.0 99,65.0 102,64.8 105,64.6 108,64.3 111,64.1 114,63.8 117,63.5 120,63.2 123,62.9 126,62.6 129,62.3 132,62.0 135,61.7 138,61.4 141,61.2 144,60.9 146,60.8 146,65.0 144,65.1 141,65.4 138,65.7 135,65.9 132,66.2 129,66.5 126,66.8 123,67.1 120,67.4 117,67.8 114,68.1 111,68.4 108,68.7 105,69.0 102,69.3 99,69.5 96,69.7 93,69.7 90,69.5 87,69.4 84,69.2 81,69.0 78,68.7 75,68.4 72,68.2 69,68.0 66,68.0 63,68.0 60,68.0 57,68.0 54,67.9 51,67.8 48,67.7 45,67.5 42,67.2 39,66.8 36,66.3 33,65.8 30,65.3 27,64.7 24,64.1 21,63.5 18,62.9 15,62.3 12,61.7 9,61.1 6,60.5 3,60.0 0,59.6" fill="rgb(78,78,78)"/>
<polygon points="0,59.3 3,59.7 6,60.2 9,60.8 12,61.4 15,62.0 18,62.6 21,63.2 24,63.8 27,64.4 30,65.0 33,65.5 36,66.0 39,66.5 42,66.9 45,67.2 48,67.4 51,67.5 54,67.6 57,67.7 60,67.7 63,67.7 66,67.7 69,67.7 72,67.9 75,68.1 78,68.4 81,68.7 84,68.9 87,69.1 90,69.2 93,69.4 96,69.4 99,69.2 102,69.0 105,68.7 108,68.4 111,68.1 114,67.8 117,67.5 120,67.1 123,66.8 126,66.5 129,66.2 132,65.9 135,65.6 138,65.4 141,65.1 144,64.8 146,64.7 146,66.3 144,66.5 141,66.7 138,67.0 135,67.3 132,67.5 129,67.8 126,68.1 123,68.4 120,68.7 117,69.1 114,69.4 111,69.7 108,70.1 105,70.4 102,70.7 99,71.0 96,71.1 93,71.2 90,71.2 87,71.2 84,71.1 81,71.0 78,70.8 75,70.6 72,70.4 69,70.3 66,70.2 63,70.2 60,70.1 57,69.9 54,69.7 51,69.5 48,69.2 45,68.9 42,68.5 39,68.1 36,67.6 33,67.0 30,66.5 27,65.9 24,65.2 21,64.6 18,64.0 15,63.4 12,62.8 9,62.1 6,61.5 3,61.0 0,60.6" fill="rgb(140,140,140)"/>
<polygon points="0,60.3 3,60.7 6,61.2 9,61.8 12,62.5 15,63.1 18,63.7 21,64.3 24,64.9 27,65.6 30,66.2 33,66.7 36,67.3 39,67.8 42,68.2 45,68.6 48,68.9 51,69.2 54,69.4 57,69.6 60,69.8 63,69.9 66,69.9 69,70.0 72,70.1 75,70.3 78,70.5 81,70.7 84,70.8 87,70.9 90,70.9 93,70.9 96,70.8 99,70.7 102,70.4 105,70.1 108,69.8 111,69.4 114,69.1 117,68.8 120,68.4 123,68.1 126,67.8 129,67.5 132,67.2 135,67.0 138,66.7 141,66.4 144,66.2 146,66.0 146,69.2 144,69.3 141,69.5 138,69.8 135,70.1 132,70.3 129,70.6 126,70.9 123,71.2 120,71.5 117,71.9 114,72.3 111,72.6 108,73.0 105,73.4 102,73.7 99,74.0 96,74.3 93,74.5 90,74.7 87,75.0 84,75.2 81,75.3 78,75.4 75,75.3 72,75.3 69,75.2 66,75.0 63,74.8 60,74.4 57,74.0 54,73.5 51,73.0 48,72.5 45,72.0 42,71.4 39,70.8 36,70.2 33,69.6 30,68.9 27,68.3 24,67.7 21,67.0 18,66.3 15,65.7 12,65.0 9,64.3 6,63.7 3,63.1 0,62.7" fill="rgb(100,100,100)"/>
<polygon points="0,62.4 3,62.8 6,63.4 9,64.0 12,64.7 15,65.4 18,66.0 21,66.7 24,67.4 27,68.0 30,68.6 33,69.3 36,69.9 39,70.5 42,71.1 45,71.7 48,72.2 51,72.7 54,73.2 57,73.7 60,74.1 63,74.5 66,74.7 69,74.9 72,75.0 75,75.0 78,75.1 81,75.0 84,74.9 87,74.7 90,74.4 93,74.2 96,74.0 99,73.7 102,73.4 105,73.1 108,72.7 111,72.3 114,72.0 117,71.6 120,71.2 123,70.9 126,70.6 129,70.3 132,70.0 135,69.8 138,69.5 141,69.2 144,69.0 146,68.9 146,74.9 144,75.0 141,75.2 138,75.5 135,75.8 132,76.0 129,76.3 126,76.6 123,76.9 120,77.2 117,77.6 114,78.0 111,78.3 108,78.7 105,79.1 102,79.4 99,79.7 96,80.0 93,80.2 90,80.4 87,80.7 84,80.9 81,81.0 78,81.1 75,81.0 72,81.0 69,80.9 66,80.7 63,80.5 60,80.1 57,79.7 54,79.2 51,78.7 48,78.2 45,77.7 42,77.1 39,76.5 36,75.9 33,75.3 30,74.6 27,74.0 24,73.4 21,72.7 18,72.0 15,71.4 12,70.7 9,70.0 6,69.4 3,68.8 0,68.4" fill="rgb(112,112,112)"/>
<polygon points="0,68.4 3,68.8 6,69.4 9,70.0 12,70.7 15,71.4 18,72.0 21,72.7 24,73.4 27,74.0 30,74.6 33,75.3 36,75.9 39,76.5 42,77.1 45,77.7 48,78.2 51,78.7 54,79.2 57,79.7 60,80.1 63,80.5 66,80.7 69,80.9 72,81.0 75,81.0 78,81.1 81,81.0 84,80.9 87,80.7 90,80.4 93,80.2 96,80.0 99,79.7 102,79.4 105,79.1 108,78.7 111,78.3 114,78.0 117,77.6 120,77.2 123,76.9 126,76.6 129,76.3 132,76.0 135,75.8 138,75.5 141,75.2 144,75.0 146,74.9 146,79.9 144,80.0 141,80.2 138,80.5 135,80.8 132,81.0 129,81.3 126,81.6 123,81.9 120,82.2 117,82.6 114,83.0 111,83.3 108,83.7 105,84.1 102,84.4 99,84.7 96,85.0 93,85.2 90,85.4 87,85.7 84,85.9 81,86.0 78,86.1 75,86.0 72,86.0 69,85.9 66,85.7 63,85.5 60,85.1 57,84.7 54,84.2 51,83.7 48,83.2 45,82.7 42,82.1 39,81.5 36,80.9 33,80.3 30,79.6 27,79.0 24,78.4 21,77.7 18,77.0 15,76.4 12,75.7 9,75.0 6,74.4 3,73.8 0,73.4" fill="rgb(90,90,90)"/>
<polygon points="0,73.4 3,73.8 6,74.4 9,75.0 12,75.7 15,76.4 18,77.0 21,77.7 24,78.4 27,79.0 30,79.6 33,80.3 36,80.9 39,81.5 42,82.1 45,82.7 48,83.2 51,83.7 54,84.2 57,84.7 60,85.1 63,85.5 66,85.7 69,85.9 72,86.0 75,86.0 78,86.1 81,86.0 84,85.9 87,85.7 90,85.4 93,85.2 96,85.0 99,84.7 102,84.4 105,84.1 108,83.7 111,83.3 114,83.0 117,82.6 120,82.2 123,81.9 126,81.6 129,81.3 132,81.0 135,80.8 138,80.5 141,80.2 144,80.0 146,79.9 146,85.9 144,86.0 141,86.2 138,86.5 135,86.8 132,87.0 129,87.3 126,87.6 123,87.9 120,88.2 117,88.6 114,89.0 111,89.3 108,89.7 105,90.1 102,90.4 99,90.7 96,91.0 93,91.2 90,91.4 87,91.7 84,91.9 81,92.0 78,92.1 75,92.0 72,92.0 69,91.9 66,91.7 63,91.5 60,91.1 57,90.7 54,90.2 51,89.7 48,89.2 45,88.7 42,88.1 39,87.5 36,86.9 33,86.3 30,85.6 27,85.0 24,84.4 21,83.7 18,83.0 15,82.4 12,81.7 9,81.0 6,80.4 3,79.8 0,79.4" fill="rgb(70,70,70)"/>
<polygon points="0,79.4 3,79.8 6,80.4 9,81.0 12,81.7 15,82.4 18,83.0 21,83.7 24,84.4 27,85.0 30,85.6 33,86.3 36,86.9 39,87.5 42,88.1 45,88.7 48,89.2 51,89.7 54,90.2 57,90.7 60,91.1 63,91.5 66,91.7 69,91.9 72,92.0 75,92.0 78,92.1 81,92.0 84,91.9 87,91.7 90,91.4 93,91.2 96,91.0 99,90.7 102,90.4 105,90.1 108,89.7 111,89.3 114,89.0 117,88.6 120,88.2 123,87.9 126,87.6 129,87.3 132,87.0 135,86.8 138,86.5 141,86.2 144,86.0 146,85.9 146,101.0 144,101.0 141,101.0 138,101.0 135,101.0 132,101.0 129,101.0 126,101.0 123,101.0 120,101.0 117,101.0 114,101.0 111,101.0 108,101.0 105,101.0 102,101.0 99,101.0 96,101.0 93,101.0 90,101.0 87,101.0 84,101.0 81,101.0 78,101.0 75,101.0 72,101.0 69,101.0 66,101.0 63,101.0 60,101.0 57,101.0 54,101.0 51,101.0 48,101.0 45,101.0 42,101.0 39,101.0 36,101.0 33,101.0 30,101.0 27,101.0 24,101.0 21,101.0 18,101.0 15,101.0 12,101.0 9,101.0 6,101.0 3,101.0 0,101.0" fill="rgb(50,50,50)"/>
<ellipse cx="63" cy="60" rx="24" ry="11" fill="#000" opacity=".2"/><ellipse cx="63" cy="60" rx="16.8" ry="8.2" fill="#000" opacity=".22"/>
<ellipse cx="72.4" cy="55.8" rx="9.4" ry="12" fill="#0c0c0c" opacity="0.97"/>
<ellipse cx="83.5" cy="61" rx="2.5" ry="5" fill="#0c0c0c" opacity="0.8" transform="rotate(10 83.5 61)"/>
<ellipse cx="55" cy="58" rx="2" ry="5" fill="#0c0c0c" opacity="0.7"/>
<ellipse cx="50" cy="59" rx="1.6" ry="4" fill="#0c0c0c" opacity="0.6"/>
<ellipse cx="60" cy="58" rx="2" ry="6" fill="#0c0c0c" opacity="0.7"/>
<ellipse cx="64" cy="57" rx="1.5" ry="6" fill="#0c0c0c" opacity="0.6"/>
<ellipse cx="47" cy="64" rx="4" ry="3" fill="#0c0c0c" opacity="0.5"/>
<ellipse cx="58" cy="67" rx="5" ry="3.5" fill="#0c0c0c" opacity="0.6"/>
<ellipse cx="88" cy="58" rx="1.5" ry="2.5" fill="#0c0c0c" opacity="0.6"/>
<path d="M52 62 V80" stroke="#000" stroke-width=".9" opacity=".42"/>
<path d="M56 62 V84" stroke="#000" stroke-width=".9" opacity=".42"/>
<path d="M60 62 V82" stroke="#000" stroke-width=".9" opacity=".42"/>
<path d="M64 62 V86" stroke="#000" stroke-width=".9" opacity=".42"/>
<path d="M68 66 V80" stroke="#000" stroke-width=".9" opacity=".42"/>
<polyline points="0,62.4 3,62.8 6,63.4 9,64.0 12,64.7 15,65.4 18,66.0 21,66.7 24,67.4 27,68.0 30,68.6 33,69.3 36,69.9 39,70.5 42,71.1 45,71.7 48,72.2 51,72.7 54,73.2 57,73.7 60,74.1 63,74.5 66,74.7 69,74.9 72,75.0 75,75.0 78,75.1 81,75.0 84,74.9 87,74.7 90,74.4 93,74.2 96,74.0 99,73.7 102,73.4 105,73.1 108,72.7 111,72.3 114,72.0 117,71.6 120,71.2 123,70.9 126,70.6 129,70.3 132,70.0 135,69.8 138,69.5 141,69.2 144,69.0 146,68.9" fill="none" stroke="#ffffff" stroke-width="4.0" opacity="1"/>
<polyline points="0,49.2 3,49.4 6,49.7 9,50.0 12,50.3 15,50.6 18,51.0 21,51.5 24,51.9 27,52.4 30,52.8 33,52.9 36,52.8 39,52.6 42,52.4 45,52.0 48,51.1 51,49.8 54,48.5 57,47.1 60,45.6 63,44.3 66,43.4 69,43.0 72,43.3 75,44.0 78,45.3 81,46.9 84,48.5 87,50.0 90,51.4 93,52.7 96,53.7 99,54.0 102,53.9 105,53.9 108,53.8 111,53.7 114,53.6 117,53.4 120,53.1 123,52.8 126,52.5 129,52.2 132,52.0 135,51.7 138,51.4 141,51.1 144,50.8 146,50.7" fill="none" stroke="#d0d0d0" stroke-width="1.3" opacity="1"/>
<polyline points="0,46.1 2,46.2 4,46.3 6,46.4 8,46.5 10,46.7 12,46.8 14,47.0 16,47.3 18,47.6 20,48.0 22,48.4 24,48.8 26,49.2 28,49.6 30,50.0 32,50.4 34,50.8 36,51.2 38,51.5" fill="none" stroke="#5c5c5c" stroke-width="0.85" opacity="1"/>
</g>
<rect x="2.5" y="3.5" width="33.8" height="29" fill="none" stroke="#c4c4c4" stroke-width="1.2"/>
<rect x="2.5" y="9.3" width="33.8" height="21.8" fill="none" stroke="#ee1010" stroke-width="1.3"/>
<rect x="110.5" y="72.5" width="24" height="22" fill="none" stroke="#9a9a9a" stroke-width=".8"/>
<path d="M110.5 82.5 H135.0 M131.0 79.8 L135.0 82.5 L131.0 85.2" fill="none" stroke="#c8c8c8" stroke-width=".8"/>
<g font-family="Liberation Sans, sans-serif" font-size="11" fill="#dcdcdc"><text x="104.0" y="86.5" opacity=".75">T</text><text x="136.0" y="86.5">N</text></g>
<path d="M6 82 V94.4 H10.8" fill="none" stroke="#f4f4f4" stroke-width="2.1"/>
</svg>
<div class="dn" style="left:84px;top:2px">DN</div>
<div class="sc" style="left:110.5px;top:2px;font-size:10.6px;letter-spacing:-.2px">32 / 64</div>
<div class="sc" style="left:9.2px;top:81.5px;letter-spacing:.1px">200 µm</div>
</div>
<div class="tomo ex" style="left:196px;width:146px">
<svg class="a" style="left:-1px;top:-1px" width="146" height="100" viewBox="0 0 146 100">
<g filter="url(#sp)"><rect width="146" height="100" fill="#0a0a0a"/>
<polygon points="0,45.1 3,45.3 6,45.6 9,45.9 12,46.2 15,46.5 18,46.8 21,47.1 24,47.5 27,47.9 30,48.3 33,48.6 36,49.0 39,49.2 42,49.0 45,48.5 48,47.8 51,46.8 54,45.3 57,43.7 60,42.1 63,40.7 66,39.6 69,39.1 72,39.3 75,40.2 78,41.8 81,43.4 84,45.0 87,46.5 90,47.9 93,48.8 96,49.1 99,49.2 102,49.3 105,49.4 108,49.4 111,49.3 114,48.9 117,48.4 120,48.0 123,47.5 126,47.1 129,46.6 132,46.1 135,45.6 138,45.0 141,44.4 144,43.9 146,43.7 146,48.1 144,48.3 141,48.7 138,49.2 135,49.7 132,50.2 129,50.7 126,51.1 123,51.5 120,51.9 117,52.3 114,52.7 111,53.1 108,53.3 105,53.3 102,53.3 99,53.3 96,53.3 93,53.1 90,52.4 87,51.4 84,50.2 81,49.0 78,47.7 75,46.5 72,45.8 69,45.7 66,46.1 63,47.0 60,48.0 57,49.2 54,50.5 51,51.6 48,52.4 45,52.9 42,53.2 39,53.3 36,53.0 33,52.6 30,52.2 27,51.8 24,51.4 21,51.0 18,50.7 15,50.3 12,49.9 9,49.6 6,49.2 3,48.9 0,48.6" fill="rgb(182,182,182)"/>
<polygon points="0,48.3 3,48.6 6,48.9 9,49.3 12,49.6 15,50.0 18,50.4 21,50.7 24,51.1 27,51.5 30,51.9 33,52.3 36,52.7 39,53.0 42,52.9 45,52.6 48,52.1 51,51.3 54,50.2 57,48.9 60,47.7 63,46.7 66,45.8 69,45.4 72,45.5 75,46.2 78,47.4 81,48.7 84,49.9 87,51.1 90,52.1 93,52.8 96,53.0 99,53.0 102,53.0 105,53.0 108,53.0 111,52.8 114,52.4 117,52.0 120,51.6 123,51.2 126,50.8 129,50.4 132,49.9 135,49.4 138,48.9 141,48.4 144,48.0 146,47.8 146,51.7 144,51.9 141,52.3 138,52.8 135,53.2 132,53.6 129,54.0 126,54.4 123,54.8 120,55.2 117,55.5 114,55.9 111,56.3 108,56.5 105,56.6 102,56.6 99,56.7 96,56.8 93,56.7 90,56.2 87,55.5 84,54.6 81,53.7 78,52.8 75,51.9 72,51.4 69,51.3 66,51.6 63,52.3 60,53.1 57,54.0 54,54.9 51,55.7 48,56.3 45,56.6 42,56.8 39,56.7 36,56.4 33,56.0 30,55.6 27,55.1 24,54.7 21,54.3 18,53.9 15,53.4 12,53.0 9,52.6 6,52.2 3,51.8 0,51.6" fill="rgb(128,128,128)"/>
<polygon points="0,51.3 3,51.5 6,51.9 9,52.3 12,52.7 15,53.1 18,53.6 21,54.0 24,54.4 27,54.8 30,55.3 33,55.7 36,56.1 39,56.4 42,56.5 45,56.3 48,56.0 51,55.4 54,54.6 57,53.7 60,52.8 63,52.0 66,51.3 69,51.0 72,51.1 75,51.6 78,52.5 81,53.4 84,54.3 87,55.2 90,55.9 93,56.4 96,56.5 99,56.4 102,56.3 105,56.3 108,56.2 111,56.0 114,55.6 117,55.2 120,54.9 123,54.5 126,54.1 129,53.7 132,53.3 135,52.9 138,52.5 141,52.0 144,51.6 146,51.4 146,53.8 144,54.0 141,54.3 138,54.7 135,55.1 132,55.5 129,55.9 126,56.3 123,56.6 120,57.0 117,57.3 114,57.7 111,58.0 108,58.3 105,58.4 102,58.5 99,58.6 96,58.7 93,58.7 90,58.3 87,57.7 84,57.1 81,56.4 78,55.7 75,55.0 72,54.5 69,54.5 66,54.7 63,55.3 60,55.9 57,56.6 54,57.4 51,58.0 48,58.4 45,58.6 42,58.7 39,58.6 36,58.3 33,57.8 30,57.4 27,57.0 24,56.5 21,56.1 18,55.6 15,55.2 12,54.8 9,54.3 6,53.9 3,53.5 0,53.2" fill="rgb(98,98,98)"/>
<polygon points="0,52.9 3,53.2 6,53.6 9,54.0 12,54.5 15,54.9 18,55.3 21,55.8 24,56.2 27,56.7 30,57.1 33,57.5 36,58.0 39,58.3 42,58.4 45,58.3 48,58.1 51,57.7 54,57.1 57,56.3 60,55.6 63,55.0 66,54.4 69,54.2 72,54.2 75,54.7 78,55.4 81,56.1 84,56.8 87,57.4 90,58.0 93,58.4 96,58.4 99,58.3 102,58.2 105,58.1 108,58.0 111,57.7 114,57.4 117,57.0 120,56.7 123,56.3 126,56.0 129,55.6 132,55.2 135,54.8 138,54.4 141,54.0 144,53.7 146,53.5 146,55.6 144,55.8 141,56.1 138,56.5 135,56.9 132,57.2 129,57.6 126,57.9 123,58.2 120,58.6 117,58.9 114,59.3 111,59.6 108,59.9 105,60.0 102,60.2 99,60.3 96,60.4 93,60.5 90,60.2 87,59.8 84,59.3 81,58.8 78,58.2 75,57.7 72,57.3 69,57.3 66,57.5 63,57.9 60,58.5 57,59.0 54,59.6 51,60.1 48,60.3 45,60.5 42,60.5 39,60.3 36,59.9 33,59.5 30,59.1 27,58.6 24,58.2 21,57.7 18,57.2 15,56.8 12,56.3 9,55.8 6,55.4 3,55.0 0,54.6" fill="rgb(128,128,128)"/>
<polygon points="0,54.3 3,54.7 6,55.1 9,55.5 12,56.0 15,56.5 18,56.9 21,57.4 24,57.9 27,58.3 30,58.8 33,59.2 36,59.6 39,60.0 42,60.2 45,60.2 48,60.0 51,59.8 54,59.3 57,58.7 60,58.2 63,57.6 66,57.2 69,57.0 72,57.0 75,57.4 78,57.9 81,58.5 84,59.0 87,59.5 90,59.9 93,60.2 96,60.1 99,60.0 102,59.9 105,59.7 108,59.6 111,59.3 114,59.0 117,58.6 120,58.3 123,57.9 126,57.6 129,57.3 132,56.9 135,56.6 138,56.2 141,55.8 144,55.5 146,55.3 146,59.9 144,60.0 141,60.3 138,60.6 135,60.9 132,61.2 129,61.5 126,61.8 123,62.1 120,62.4 117,62.7 114,63.0 111,63.3 108,63.6 105,63.9 102,64.1 99,64.3 96,64.5 93,64.7 90,64.7 87,64.6 84,64.5 81,64.3 78,64.1 75,64.0 72,63.9 69,63.9 66,64.0 63,64.2 60,64.4 57,64.6 54,64.7 51,64.8 48,64.8 45,64.7 42,64.6 39,64.3 36,63.9 33,63.4 30,62.9 27,62.4 24,62.0 21,61.5 18,61.0 15,60.4 12,59.9 9,59.4 6,58.9 3,58.4 0,58.0" fill="rgb(78,78,78)"/>
<polygon points="0,57.7 3,58.1 6,58.6 9,59.1 12,59.6 15,60.1 18,60.7 21,61.2 24,61.7 27,62.1 30,62.6 33,63.1 36,63.6 39,64.0 42,64.3 45,64.4 48,64.5 51,64.5 54,64.4 57,64.3 60,64.1 63,63.9 66,63.7 69,63.6 72,63.6 75,63.7 78,63.8 81,64.0 84,64.2 87,64.3 90,64.4 93,64.4 96,64.2 99,64.0 102,63.8 105,63.6 108,63.3 111,63.0 114,62.7 117,62.4 120,62.1 123,61.8 126,61.5 129,61.2 132,60.9 135,60.6 138,60.3 141,60.0 144,59.7 146,59.6 146,61.4 144,61.5 141,61.7 138,62.0 135,62.3 132,62.5 129,62.8 126,63.1 123,63.3 120,63.6 117,63.9 114,64.3 111,64.6 108,64.9 105,65.1 102,65.4 99,65.6 96,65.9 93,66.1 90,66.2 87,66.2 84,66.2 81,66.2 78,66.1 75,66.1 72,66.1 69,66.1 66,66.2 63,66.3 60,66.4 57,66.4 54,66.4 51,66.4 48,66.3 45,66.2 42,66.0 39,65.6 36,65.2 33,64.7 30,64.2 27,63.7 24,63.2 21,62.7 18,62.2 15,61.7 12,61.1 9,60.6 6,60.0 3,59.5 0,59.2" fill="rgb(140,140,140)"/>
<polygon points="0,58.9 3,59.2 6,59.7 9,60.3 12,60.8 15,61.4 18,61.9 21,62.4 24,62.9 27,63.4 30,63.9 33,64.4 36,64.9 39,65.3 42,65.7 45,65.9 48,66.0 51,66.1 54,66.1 57,66.1 60,66.1 63,66.0 66,65.9 69,65.8 72,65.8 75,65.8 78,65.8 81,65.9 84,65.9 87,65.9 90,65.9 93,65.8 96,65.6 99,65.3 102,65.1 105,64.8 108,64.6 111,64.3 114,64.0 117,63.6 120,63.3 123,63.0 126,62.8 129,62.5 132,62.2 135,62.0 138,61.7 141,61.4 144,61.2 146,61.1 146,64.4 144,64.5 141,64.7 138,64.9 135,65.1 132,65.4 129,65.6 126,65.8 123,66.1 120,66.3 117,66.6 114,66.9 111,67.2 108,67.5 105,67.9 102,68.2 99,68.5 96,68.8 93,69.1 90,69.3 87,69.6 84,69.9 81,70.1 78,70.4 75,70.6 72,70.7 69,70.8 66,70.8 63,70.7 60,70.6 57,70.4 54,70.1 51,69.8 48,69.6 45,69.2 42,68.9 39,68.5 36,68.0 33,67.5 30,67.0 27,66.5 24,66.0 21,65.4 18,64.9 15,64.3 12,63.7 9,63.1 6,62.5 3,62.0 0,61.6" fill="rgb(100,100,100)"/>
<polygon points="0,61.3 3,61.7 6,62.2 9,62.8 12,63.4 15,64.0 18,64.6 21,65.1 24,65.7 27,66.2 30,66.7 33,67.2 36,67.7 39,68.2 42,68.6 45,68.9 48,69.3 51,69.5 54,69.8 57,70.1 60,70.3 63,70.4 66,70.5 69,70.5 72,70.4 75,70.3 78,70.1 81,69.8 84,69.6 87,69.3 90,69.0 93,68.8 96,68.5 99,68.2 102,67.9 105,67.6 108,67.2 111,66.9 114,66.6 117,66.3 120,66.0 123,65.8 126,65.5 129,65.3 132,65.1 135,64.8 138,64.6 141,64.4 144,64.2 146,64.1 146,70.1 144,70.2 141,70.4 138,70.6 135,70.8 132,71.1 129,71.3 126,71.5 123,71.8 120,72.0 117,72.3 114,72.6 111,72.9 108,73.2 105,73.6 102,73.9 99,74.2 96,74.5 93,74.8 90,75.0 87,75.3 84,75.6 81,75.8 78,76.1 75,76.3 72,76.4 69,76.5 66,76.5 63,76.4 60,76.3 57,76.1 54,75.8 51,75.5 48,75.3 45,74.9 42,74.6 39,74.2 36,73.7 33,73.2 30,72.7 27,72.2 24,71.7 21,71.1 18,70.6 15,70.0 12,69.4 9,68.8 6,68.2 3,67.7 0,67.3" fill="rgb(112,112,112)"/>
<polygon points="0,67.3 3,67.7 6,68.2 9,68.8 12,69.4 15,70.0 18,70.6 21,71.1 24,71.7 27,72.2 30,72.7 33,73.2 36,73.7 39,74.2 42,74.6 45,74.9 48,75.3 51,75.5 54,75.8 57,76.1 60,76.3 63,76.4 66,76.5 69,76.5 72,76.4 75,76.3 78,76.1 81,75.8 84,75.6 87,75.3 90,75.0 93,74.8 96,74.5 99,74.2 102,73.9 105,73.6 108,73.2 111,72.9 114,72.6 117,72.3 120,72.0 123,71.8 126,71.5 129,71.3 132,71.1 135,70.8 138,70.6 141,70.4 144,70.2 146,70.1 146,75.1 144,75.2 141,75.4 138,75.6 135,75.8 132,76.1 129,76.3 126,76.5 123,76.8 120,77.0 117,77.3 114,77.6 111,77.9 108,78.2 105,78.6 102,78.9 99,79.2 96,79.5 93,79.8 90,80.0 87,80.3 84,80.6 81,80.8 78,81.1 75,81.3 72,81.4 69,81.5 66,81.5 63,81.4 60,81.3 57,81.1 54,80.8 51,80.5 48,80.3 45,79.9 42,79.6 39,79.2 36,78.7 33,78.2 30,77.7 27,77.2 24,76.7 21,76.1 18,75.6 15,75.0 12,74.4 9,73.8 6,73.2 3,72.7 0,72.3" fill="rgb(90,90,90)"/>
<polygon points="0,72.3 3,72.7 6,73.2 9,73.8 12,74.4 15,75.0 18,75.6 21,76.1 24,76.7 27,77.2 30,77.7 33,78.2 36,78.7 39,79.2 42,79.6 45,79.9 48,80.3 51,80.5 54,80.8 57,81.1 60,81.3 63,81.4 66,81.5 69,81.5 72,81.4 75,81.3 78,81.1 81,80.8 84,80.6 87,80.3 90,80.0 93,79.8 96,79.5 99,79.2 102,78.9 105,78.6 108,78.2 111,77.9 114,77.6 117,77.3 120,77.0 123,76.8 126,76.5 129,76.3 132,76.1 135,75.8 138,75.6 141,75.4 144,75.2 146,75.1 146,81.1 144,81.2 141,81.4 138,81.6 135,81.8 132,82.1 129,82.3 126,82.5 123,82.8 120,83.0 117,83.3 114,83.6 111,83.9 108,84.2 105,84.6 102,84.9 99,85.2 96,85.5 93,85.8 90,86.0 87,86.3 84,86.6 81,86.8 78,87.1 75,87.3 72,87.4 69,87.5 66,87.5 63,87.4 60,87.3 57,87.1 54,86.8 51,86.5 48,86.3 45,85.9 42,85.6 39,85.2 36,84.7 33,84.2 30,83.7 27,83.2 24,82.7 21,82.1 18,81.6 15,81.0 12,80.4 9,79.8 6,79.2 3,78.7 0,78.3" fill="rgb(70,70,70)"/>
<polygon points="0,78.3 3,78.7 6,79.2 9,79.8 12,80.4 15,81.0 18,81.6 21,82.1 24,82.7 27,83.2 30,83.7 33,84.2 36,84.7 39,85.2 42,85.6 45,85.9 48,86.3 51,86.5 54,86.8 57,87.1 60,87.3 63,87.4 66,87.5 69,87.5 72,87.4 75,87.3 78,87.1 81,86.8 84,86.6 87,86.3 90,86.0 93,85.8 96,85.5 99,85.2 102,84.9 105,84.6 108,84.2 111,83.9 114,83.6 117,83.3 120,83.0 123,82.8 126,82.5 129,82.3 132,82.1 135,81.8 138,81.6 141,81.4 144,81.2 146,81.1 146,101.0 144,101.0 141,101.0 138,101.0 135,101.0 132,101.0 129,101.0 126,101.0 123,101.0 120,101.0 117,101.0 114,101.0 111,101.0 108,101.0 105,101.0 102,101.0 99,101.0 96,101.0 93,101.0 90,101.0 87,101.0 84,101.0 81,101.0 78,101.0 75,101.0 72,101.0 69,101.0 66,101.0 63,101.0 60,101.0 57,101.0 54,101.0 51,101.0 48,101.0 45,101.0 42,101.0 39,101.0 36,101.0 33,101.0 30,101.0 27,101.0 24,101.0 21,101.0 18,101.0 15,101.0 12,101.0 9,101.0 6,101.0 3,101.0 0,101.0" fill="rgb(50,50,50)"/>
<ellipse cx="68" cy="56" rx="22" ry="11" fill="#000" opacity=".2"/><ellipse cx="68" cy="56" rx="15.4" ry="8.2" fill="#000" opacity=".22"/>
<ellipse cx="76.8" cy="52" rx="8.6" ry="11" fill="#0c0c0c" opacity="0.96" transform="rotate(-14 76.8 52)"/>
<ellipse cx="73" cy="44.5" rx="3" ry="5" fill="#0c0c0c" opacity="0.7" transform="rotate(20 73 44.5)"/>
<ellipse cx="60" cy="56" rx="4" ry="5" fill="#0c0c0c" opacity="0.78"/>
<ellipse cx="54" cy="53" rx="3" ry="3" fill="#0c0c0c" opacity="0.6"/>
<ellipse cx="66" cy="61" rx="3.5" ry="5.5" fill="#0c0c0c" opacity="0.85"/>
<ellipse cx="57" cy="62" rx="3" ry="3.5" fill="#0c0c0c" opacity="0.65"/>
<ellipse cx="64" cy="50" rx="2.2" ry="3.5" fill="#0c0c0c" opacity="0.7"/>
<ellipse cx="69" cy="47" rx="1.5" ry="4" fill="#0c0c0c" opacity="0.55"/>
<path d="M58 62 V80" stroke="#000" stroke-width=".9" opacity=".42"/>
<path d="M66 64 V84" stroke="#000" stroke-width=".9" opacity=".42"/>
<path d="M71 62 V78" stroke="#000" stroke-width=".9" opacity=".42"/>
<polyline points="0,61.3 3,61.7 6,62.2 9,62.8 12,63.4 15,64.0 18,64.6 21,65.1 24,65.7 27,66.2 30,66.7 33,67.2 36,67.7 39,68.2 42,68.6 45,68.9 48,69.3 51,69.5 54,69.8 57,70.1 60,70.3 63,70.4 66,70.5 69,70.5 72,70.4 75,70.3 78,70.1 81,69.8 84,69.6 87,69.3 90,69.0 93,68.8 96,68.5 99,68.2 102,67.9 105,67.6 108,67.2 111,66.9 114,66.6 117,66.3 120,66.0 123,65.8 126,65.5 129,65.3 132,65.1 135,64.8 138,64.6 141,64.4 144,64.2 146,64.1" fill="none" stroke="#ffffff" stroke-width="4.0" opacity="1"/>
<polyline points="0,45.7 3,45.9 6,46.2 9,46.5 12,46.8 15,47.1 18,47.4 21,47.7 24,48.1 27,48.5 30,48.9 33,49.2 36,49.6 39,49.8 42,49.6 45,49.1 48,48.4 51,47.4 54,45.9 57,44.3 60,42.7 63,41.3 66,40.2 69,39.7 72,39.9 75,40.8 78,42.4 81,44.0 84,45.6 87,47.1 90,48.5 93,49.4 96,49.7 99,49.8 102,49.9 105,50.0 108,50.0 111,49.9 114,49.5 117,49.0 120,48.6 123,48.1 126,47.7 129,47.2 132,46.7 135,46.2 138,45.6 141,45.0 144,44.5 146,44.3" fill="none" stroke="#d0d0d0" stroke-width="1.3" opacity="1"/>
</g>
<rect x="2.8" y="3.5" width="31.8" height="29" fill="none" stroke="#c4c4c4" stroke-width="1.2"/>
<rect x="2.8" y="9.3" width="31.8" height="21.8" fill="none" stroke="#ee1010" stroke-width="1.3"/>
<rect x="111.5" y="72.5" width="24" height="22" fill="none" stroke="#9a9a9a" stroke-width=".8"/>
<path d="M111.5 82.5 H136.0 M132.0 79.8 L136.0 82.5 L132.0 85.2" fill="none" stroke="#c8c8c8" stroke-width=".8"/>
<g font-family="Liberation Sans, sans-serif" font-size="11" fill="#dcdcdc"><text x="105.0" y="86.5" opacity=".75">T</text><text x="137.0" y="86.5">N</text></g>
<path d="M6 82 V94.4 H10.8" fill="none" stroke="#f4f4f4" stroke-width="2.1"/>
</svg>
<div class="dn" style="left:116px;top:1px">DN</div>
<div class="sc" style="left:8.2px;top:80.5px;letter-spacing:.1px">200 µm</div>
</div>
<div class="ext" style="left:196px">EXTRACTED TOMOGRAM</div>
<div class="tomo ex" style="left:348.5px;width:146px">
<svg class="a" style="left:-1px;top:-1px" width="146" height="100" viewBox="0 0 146 100">
<g filter="url(#sp)"><rect width="146" height="100" fill="#0a0a0a"/>
<polygon points="0,53.7 3,53.9 6,54.0 9,54.2 12,54.3 15,54.5 18,54.7 21,55.0 24,55.2 27,55.4 30,55.6 33,55.8 36,55.9 39,55.7 42,55.5 45,55.2 48,54.8 51,53.9 54,52.9 57,51.9 60,50.9 63,50.0 66,49.1 69,48.6 72,48.5 75,48.8 78,49.3 81,50.1 84,50.9 87,51.7 90,52.3 93,52.9 96,53.4 99,54.0 102,54.3 105,54.4 108,54.4 111,54.5 114,54.5 117,54.5 120,54.4 123,54.3 126,54.2 129,54.0 132,53.8 135,53.6 138,53.5 141,53.3 144,53.1 146,53.0 146,56.3 144,56.4 141,56.6 138,56.8 135,57.0 132,57.3 129,57.5 126,57.7 123,58.0 120,58.2 117,58.3 114,58.3 111,58.4 108,58.5 105,58.6 102,58.6 99,58.4 96,58.0 93,57.6 90,57.2 87,56.8 84,56.2 81,55.6 78,55.0 75,54.6 72,54.4 69,54.5 66,54.9 63,55.6 60,56.3 57,57.0 54,57.8 51,58.5 48,59.2 45,59.4 42,59.6 39,59.6 36,59.7 33,59.6 30,59.3 27,59.0 24,58.7 21,58.4 18,58.1 15,57.7 12,57.4 9,57.2 6,56.9 3,56.6 0,56.4" fill="rgb(182,182,182)"/>
<polygon points="0,56.1 3,56.3 6,56.6 9,56.9 12,57.1 15,57.4 18,57.8 21,58.1 24,58.4 27,58.7 30,59.0 33,59.3 36,59.4 39,59.3 42,59.3 45,59.1 48,58.9 51,58.2 54,57.5 57,56.7 60,56.0 63,55.3 66,54.6 69,54.2 72,54.1 75,54.3 78,54.7 81,55.3 84,55.9 87,56.5 90,56.9 93,57.3 96,57.7 99,58.1 102,58.3 105,58.3 108,58.2 111,58.1 114,58.0 117,58.0 120,57.9 123,57.7 126,57.4 129,57.2 132,57.0 135,56.7 138,56.5 141,56.3 144,56.1 146,56.0 146,58.9 144,59.1 141,59.3 138,59.6 135,59.8 132,60.1 129,60.4 126,60.7 123,61.0 120,61.2 117,61.4 114,61.6 111,61.7 108,61.9 105,62.0 102,62.1 99,62.0 96,61.8 93,61.6 90,61.4 87,61.1 84,60.7 81,60.3 78,59.9 75,59.6 72,59.4 69,59.5 66,59.9 63,60.3 60,60.9 57,61.4 54,61.9 51,62.4 48,62.8 45,63.0 42,63.0 39,62.9 36,62.9 33,62.6 30,62.3 27,62.0 24,61.6 21,61.2 18,60.8 15,60.4 12,60.0 9,59.6 6,59.2 3,58.8 0,58.5" fill="rgb(128,128,128)"/>
<polygon points="0,58.2 3,58.5 6,58.9 9,59.3 12,59.7 15,60.1 18,60.5 21,60.9 24,61.3 27,61.7 30,62.0 33,62.3 36,62.6 39,62.6 42,62.7 45,62.7 48,62.5 51,62.1 54,61.6 57,61.1 60,60.6 63,60.0 66,59.6 69,59.2 72,59.1 75,59.3 78,59.6 81,60.0 84,60.4 87,60.8 90,61.1 93,61.3 96,61.5 99,61.7 102,61.8 105,61.7 108,61.6 111,61.4 114,61.3 117,61.1 120,60.9 123,60.7 126,60.4 129,60.1 132,59.8 135,59.5 138,59.3 141,59.0 144,58.8 146,58.6 146,60.4 144,60.5 141,60.8 138,61.1 135,61.4 132,61.7 129,62.0 126,62.3 123,62.6 120,62.9 117,63.2 114,63.4 111,63.5 108,63.7 105,63.9 102,64.1 99,64.1 96,64.0 93,63.8 90,63.7 87,63.5 84,63.2 81,62.9 78,62.6 75,62.3 72,62.2 69,62.3 66,62.6 63,63.0 60,63.4 57,63.8 54,64.2 51,64.6 48,64.9 45,65.0 42,64.9 39,64.8 36,64.6 33,64.4 30,64.0 27,63.6 24,63.2 21,62.7 18,62.3 15,61.8 12,61.4 9,60.9 6,60.4 3,60.0 0,59.7" fill="rgb(98,98,98)"/>
<polygon points="0,59.4 3,59.7 6,60.1 9,60.6 12,61.1 15,61.5 18,62.0 21,62.4 24,62.9 27,63.3 30,63.7 33,64.1 36,64.3 39,64.5 42,64.6 45,64.7 48,64.6 51,64.3 54,63.9 57,63.5 60,63.1 63,62.7 66,62.3 69,62.0 72,61.9 75,62.0 78,62.3 81,62.6 84,62.9 87,63.2 90,63.4 93,63.5 96,63.7 99,63.8 102,63.8 105,63.6 108,63.4 111,63.2 114,63.1 117,62.9 120,62.6 123,62.3 126,62.0 129,61.7 132,61.4 135,61.1 138,60.8 141,60.5 144,60.2 146,60.1 146,61.7 144,61.9 141,62.1 138,62.5 135,62.8 132,63.1 129,63.5 126,63.8 123,64.1 120,64.5 117,64.7 114,65.0 111,65.2 108,65.4 105,65.7 102,65.8 99,65.9 96,65.9 93,65.8 90,65.8 87,65.7 84,65.5 81,65.2 78,65.0 75,64.8 72,64.8 69,64.9 66,65.1 63,65.4 60,65.7 57,66.0 54,66.3 51,66.5 48,66.7 45,66.7 42,66.6 39,66.4 36,66.2 33,65.9 30,65.5 27,65.1 24,64.6 21,64.2 18,63.7 15,63.2 12,62.6 9,62.1 6,61.6 3,61.1 0,60.7" fill="rgb(128,128,128)"/>
<polygon points="0,60.4 3,60.8 6,61.3 9,61.8 12,62.3 15,62.9 18,63.4 21,63.9 24,64.3 27,64.8 30,65.2 33,65.6 36,65.9 39,66.1 42,66.3 45,66.4 48,66.4 51,66.2 54,66.0 57,65.7 60,65.4 63,65.1 66,64.8 69,64.6 72,64.5 75,64.5 78,64.7 81,64.9 84,65.2 87,65.4 90,65.5 93,65.5 96,65.6 99,65.6 102,65.5 105,65.4 108,65.1 111,64.9 114,64.7 117,64.4 120,64.2 123,63.8 126,63.5 129,63.2 132,62.8 135,62.5 138,62.2 141,61.8 144,61.6 146,61.4 146,64.8 144,65.0 141,65.3 138,65.7 135,66.1 132,66.5 129,66.9 126,67.3 123,67.7 120,68.0 117,68.4 114,68.7 111,69.0 108,69.4 105,69.7 102,70.0 99,70.2 96,70.4 93,70.5 90,70.6 87,70.7 84,70.7 81,70.7 78,70.7 75,70.6 72,70.6 69,70.7 66,70.9 63,71.0 60,71.0 57,71.0 54,71.1 51,71.1 48,71.0 45,70.9 42,70.6 39,70.3 36,69.9 33,69.5 30,69.1 27,68.5 24,68.0 21,67.4 18,66.8 15,66.2 12,65.6 9,64.9 6,64.2 3,63.6 0,63.2" fill="rgb(78,78,78)"/>
<polygon points="0,62.9 3,63.3 6,63.9 9,64.6 12,65.3 15,65.9 18,66.5 21,67.1 24,67.7 27,68.2 30,68.8 33,69.2 36,69.6 39,70.0 42,70.3 45,70.6 48,70.7 51,70.8 54,70.8 57,70.7 60,70.7 63,70.7 66,70.6 69,70.4 72,70.3 75,70.3 78,70.4 81,70.4 84,70.4 87,70.4 90,70.3 93,70.2 96,70.1 99,69.9 102,69.7 105,69.4 108,69.1 111,68.7 114,68.4 117,68.1 120,67.7 123,67.4 126,67.0 129,66.6 132,66.2 135,65.8 138,65.4 141,65.0 144,64.7 146,64.5 146,65.8 144,66.0 141,66.3 138,66.7 135,67.2 132,67.6 129,68.0 126,68.4 123,68.8 120,69.2 117,69.6 114,70.0 111,70.3 108,70.7 105,71.0 102,71.4 99,71.6 96,71.8 93,72.1 90,72.2 87,72.4 84,72.5 81,72.5 78,72.5 75,72.6 72,72.6 69,72.7 66,72.8 63,72.8 60,72.8 57,72.7 54,72.7 51,72.6 48,72.5 45,72.2 42,71.9 39,71.6 36,71.2 33,70.7 30,70.2 27,69.7 24,69.1 21,68.5 18,67.9 15,67.3 12,66.6 9,65.9 6,65.1 3,64.5 0,64.0" fill="rgb(140,140,140)"/>
<polygon points="0,63.7 3,64.2 6,64.8 9,65.6 12,66.3 15,67.0 18,67.6 21,68.2 24,68.8 27,69.4 30,69.9 33,70.4 36,70.9 39,71.3 42,71.6 45,71.9 48,72.2 51,72.3 54,72.4 57,72.4 60,72.5 63,72.5 66,72.5 69,72.4 72,72.3 75,72.3 78,72.2 81,72.2 84,72.2 87,72.1 90,71.9 93,71.8 96,71.5 99,71.3 102,71.1 105,70.7 108,70.4 111,70.0 114,69.7 117,69.3 120,68.9 123,68.5 126,68.1 129,67.7 132,67.3 135,66.9 138,66.4 141,66.0 144,65.7 146,65.5 146,68.0 144,68.2 141,68.6 138,69.0 135,69.5 132,70.0 129,70.4 126,70.9 123,71.3 120,71.8 117,72.2 114,72.7 111,73.1 108,73.5 105,73.9 102,74.3 99,74.7 96,75.0 93,75.4 90,75.7 87,76.0 84,76.3 81,76.4 78,76.6 75,76.7 72,76.8 69,76.9 66,76.9 63,76.8 60,76.6 57,76.4 54,76.1 51,75.8 48,75.5 45,75.2 42,74.8 39,74.3 36,73.8 33,73.3 30,72.8 27,72.2 24,71.5 21,70.9 18,70.2 15,69.5 12,68.7 9,67.9 6,67.0 3,66.3 0,65.8" fill="rgb(100,100,100)"/>
<polygon points="0,65.5 3,66.0 6,66.7 9,67.6 12,68.4 15,69.2 18,69.9 21,70.6 24,71.2 27,71.9 30,72.5 33,73.0 36,73.5 39,74.0 42,74.5 45,74.9 48,75.2 51,75.5 54,75.8 57,76.1 60,76.3 63,76.5 66,76.6 69,76.6 72,76.5 75,76.4 78,76.3 81,76.1 84,76.0 87,75.7 90,75.4 93,75.1 96,74.7 99,74.4 102,74.0 105,73.6 108,73.2 111,72.8 114,72.4 117,71.9 120,71.5 123,71.0 126,70.6 129,70.1 132,69.7 135,69.2 138,68.7 141,68.3 144,67.9 146,67.7 146,73.7 144,73.9 141,74.3 138,74.7 135,75.2 132,75.7 129,76.1 126,76.6 123,77.0 120,77.5 117,77.9 114,78.4 111,78.8 108,79.2 105,79.6 102,80.0 99,80.4 96,80.7 93,81.1 90,81.4 87,81.7 84,82.0 81,82.1 78,82.3 75,82.4 72,82.5 69,82.6 66,82.6 63,82.5 60,82.3 57,82.1 54,81.8 51,81.5 48,81.2 45,80.9 42,80.5 39,80.0 36,79.5 33,79.0 30,78.5 27,77.9 24,77.2 21,76.6 18,75.9 15,75.2 12,74.4 9,73.6 6,72.7 3,72.0 0,71.5" fill="rgb(112,112,112)"/>
<polygon points="0,71.5 3,72.0 6,72.7 9,73.6 12,74.4 15,75.2 18,75.9 21,76.6 24,77.2 27,77.9 30,78.5 33,79.0 36,79.5 39,80.0 42,80.5 45,80.9 48,81.2 51,81.5 54,81.8 57,82.1 60,82.3 63,82.5 66,82.6 69,82.6 72,82.5 75,82.4 78,82.3 81,82.1 84,82.0 87,81.7 90,81.4 93,81.1 96,80.7 99,80.4 102,80.0 105,79.6 108,79.2 111,78.8 114,78.4 117,77.9 120,77.5 123,77.0 126,76.6 129,76.1 132,75.7 135,75.2 138,74.7 141,74.3 144,73.9 146,73.7 146,78.7 144,78.9 141,79.3 138,79.7 135,80.2 132,80.7 129,81.1 126,81.6 123,82.0 120,82.5 117,82.9 114,83.4 111,83.8 108,84.2 105,84.6 102,85.0 99,85.4 96,85.7 93,86.1 90,86.4 87,86.7 84,87.0 81,87.1 78,87.3 75,87.4 72,87.5 69,87.6 66,87.6 63,87.5 60,87.3 57,87.1 54,86.8 51,86.5 48,86.2 45,85.9 42,85.5 39,85.0 36,84.5 33,84.0 30,83.5 27,82.9 24,82.2 21,81.6 18,80.9 15,80.2 12,79.4 9,78.6 6,77.7 3,77.0 0,76.5" fill="rgb(90,90,90)"/>
<polygon points="0,76.5 3,77.0 6,77.7 9,78.6 12,79.4 15,80.2 18,80.9 21,81.6 24,82.2 27,82.9 30,83.5 33,84.0 36,84.5 39,85.0 42,85.5 45,85.9 48,86.2 51,86.5 54,86.8 57,87.1 60,87.3 63,87.5 66,87.6 69,87.6 72,87.5 75,87.4 78,87.3 81,87.1 84,87.0 87,86.7 90,86.4 93,86.1 96,85.7 99,85.4 102,85.0 105,84.6 108,84.2 111,83.8 114,83.4 117,82.9 120,82.5 123,82.0 126,81.6 129,81.1 132,80.7 135,80.2 138,79.7 141,79.3 144,78.9 146,78.7 146,84.7 144,84.9 141,85.3 138,85.7 135,86.2 132,86.7 129,87.1 126,87.6 123,88.0 120,88.5 117,88.9 114,89.4 111,89.8 108,90.2 105,90.6 102,91.0 99,91.4 96,91.7 93,92.1 90,92.4 87,92.7 84,93.0 81,93.1 78,93.3 75,93.4 72,93.5 69,93.6 66,93.6 63,93.5 60,93.3 57,93.1 54,92.8 51,92.5 48,92.2 45,91.9 42,91.5 39,91.0 36,90.5 33,90.0 30,89.5 27,88.9 24,88.2 21,87.6 18,86.9 15,86.2 12,85.4 9,84.6 6,83.7 3,83.0 0,82.5" fill="rgb(70,70,70)"/>
<polygon points="0,82.5 3,83.0 6,83.7 9,84.6 12,85.4 15,86.2 18,86.9 21,87.6 24,88.2 27,88.9 30,89.5 33,90.0 36,90.5 39,91.0 42,91.5 45,91.9 48,92.2 51,92.5 54,92.8 57,93.1 60,93.3 63,93.5 66,93.6 69,93.6 72,93.5 75,93.4 78,93.3 81,93.1 84,93.0 87,92.7 90,92.4 93,92.1 96,91.7 99,91.4 102,91.0 105,90.6 108,90.2 111,89.8 114,89.4 117,88.9 120,88.5 123,88.0 126,87.6 129,87.1 132,86.7 135,86.2 138,85.7 141,85.3 144,84.9 146,84.7 146,101.0 144,101.0 141,101.0 138,101.0 135,101.0 132,101.0 129,101.0 126,101.0 123,101.0 120,101.0 117,101.0 114,101.0 111,101.0 108,101.0 105,101.0 102,101.0 99,101.0 96,101.0 93,101.0 90,101.0 87,101.0 84,101.0 81,101.0 78,101.0 75,101.0 72,101.0 69,101.0 66,101.0 63,101.0 60,101.0 57,101.0 54,101.0 51,101.0 48,101.0 45,101.0 42,101.0 39,101.0 36,101.0 33,101.0 30,101.0 27,101.0 24,101.0 21,101.0 18,101.0 15,101.0 12,101.0 9,101.0 6,101.0 3,101.0 0,101.0" fill="rgb(50,50,50)"/>
<ellipse cx="70" cy="63" rx="28" ry="9" fill="#000" opacity=".2"/><ellipse cx="70" cy="63" rx="19.6" ry="6.8" fill="#000" opacity=".22"/>
<ellipse cx="72.1" cy="59.5" rx="6.8" ry="9.5" fill="#0c0c0c" opacity="0.85"/>
<ellipse cx="87.5" cy="62.8" rx="7" ry="5.2" fill="#0c0c0c" opacity="0.92" transform="rotate(8 87.5 62.8)"/>
<ellipse cx="60" cy="62" rx="4" ry="6" fill="#0c0c0c" opacity="0.55"/>
<ellipse cx="52" cy="64" rx="3.5" ry="4.5" fill="#0c0c0c" opacity="0.6"/>
<ellipse cx="64" cy="57" rx="2.5" ry="3" fill="#0c0c0c" opacity="0.5"/>
<ellipse cx="99" cy="59.5" rx="3.5" ry="1.5" fill="#0c0c0c" opacity="0.6"/>
<ellipse cx="47" cy="62.5" rx="2" ry="2.5" fill="#0c0c0c" opacity="0.6"/>
<path d="M49 64 V78" stroke="#000" stroke-width=".9" opacity=".42"/>
<path d="M53 64 V78" stroke="#000" stroke-width=".9" opacity=".42"/>
<path d="M57 60 V76" stroke="#000" stroke-width=".9" opacity=".42"/>
<polyline points="0,65.5 3,66.0 6,66.7 9,67.6 12,68.4 15,69.2 18,69.9 21,70.6 24,71.2 27,71.9 30,72.5 33,73.0 36,73.5 39,74.0 42,74.5 45,74.9 48,75.2 51,75.5 54,75.8 57,76.1 60,76.3 63,76.5 66,76.6 69,76.6 72,76.5 75,76.4 78,76.3 81,76.1 84,76.0 87,75.7 90,75.4 93,75.1 96,74.7 99,74.4 102,74.0 105,73.6 108,73.2 111,72.8 114,72.4 117,71.9 120,71.5 123,71.0 126,70.6 129,70.1 132,69.7 135,69.2 138,68.7 141,68.3 144,67.9 146,67.7" fill="none" stroke="#ffffff" stroke-width="4.0" opacity="1"/>
<polyline points="0,54.3 3,54.5 6,54.6 9,54.8 12,54.9 15,55.1 18,55.3 21,55.6 24,55.8 27,56.0 30,56.2 33,56.4 36,56.5 39,56.3 42,56.1 45,55.8 48,55.4 51,54.5 54,53.5 57,52.5 60,51.5 63,50.6 66,49.7 69,49.2 72,49.1 75,49.4 78,49.9 81,50.7 84,51.5 87,52.3 90,52.9 93,53.5 96,54.0 99,54.6 102,54.9 105,55.0 108,55.0 111,55.1 114,55.1 117,55.1 120,55.0 123,54.9 126,54.8 129,54.6 132,54.4 135,54.2 138,54.1 141,53.9 144,53.7 146,53.6" fill="none" stroke="#d0d0d0" stroke-width="1.3" opacity="1"/>
<polyline points="0,46.4 2,46.4 4,46.3 6,46.3 8,46.3 10,46.3 12,46.2 14,46.2 16,46.2 18,46.2 20,46.1 22,46.1 24,46.1 26,46.1 28,46.0 30,46.0 32,45.9 34,45.9 36,45.8 38,45.7 40,45.7 42,45.6 44,45.5 46,45.5 48,45.4 50,45.3 52,45.3 54,45.2 56,45.1 58,45.1 60,45.0 62,44.9 64,44.8 66,44.7 68,44.6 70,44.5 72,44.4 74,44.3 76,44.3 78,44.2 80,44.1 82,44.0 84,43.9 86,43.8 88,43.7 90,43.7 92,43.6 94,43.6 96,43.6 98,43.7 100,43.7 102,43.7 104,43.7 106,43.7 108,43.7 110,43.7 112,43.7 114,43.8 116,43.8 118,43.8 120,43.9 122,44.0 124,44.1 126,44.2 128,44.4 130,44.5 132,44.7 134,44.8 136,45.0 138,45.1 140,45.3 142,45.4 144,45.5 146,45.6" fill="none" stroke="#5c5c5c" stroke-width="0.85" opacity="1"/>
<polygon points="0,101 146,95.5 146,101" fill="#000"/><polygon points="141.5,0 146,0 146,100 144,100" fill="#000"/>
</g>
<rect x="2.8" y="3.5" width="31.8" height="29" fill="none" stroke="#c4c4c4" stroke-width="1.2"/>
<rect x="2.8" y="10.5" width="31.8" height="21.8" fill="none" stroke="#ee1010" stroke-width="1.3"/>
<rect x="111.5" y="72.5" width="24" height="22" fill="none" stroke="#9a9a9a" stroke-width=".8"/>
<path d="M111.5 82.5 H136.0 M132.0 79.8 L136.0 82.5 L132.0 85.2" fill="none" stroke="#c8c8c8" stroke-width=".8"/>
<g font-family="Liberation Sans, sans-serif" font-size="11" fill="#dcdcdc"><text x="105.0" y="86.5" opacity=".75">T</text><text x="137.0" y="86.5">N</text></g>
<path d="M6 82 V94.4 H10.8" fill="none" stroke="#f4f4f4" stroke-width="2.1"/>
</svg>
<div class="dn" style="left:116px;top:1px">DN</div>
<div class="sc" style="left:8.2px;top:80.5px;letter-spacing:.1px">200 µm</div>
</div>
<div class="ext" style="left:348.5px">EXTRACTED TOMOGRAM</div>
<div class="tomo ex" style="left:501px;width:146px">
<svg class="a" style="left:-1px;top:-1px" width="146" height="100" viewBox="0 0 146 100">
<g filter="url(#sp)"><rect width="146" height="100" fill="#0a0a0a"/>
<polygon points="0,53.1 3,53.3 6,53.6 9,53.8 12,54.1 15,54.4 18,54.7 21,55.0 24,55.2 27,55.5 30,55.8 33,55.8 36,55.5 39,55.1 42,54.7 45,54.1 48,53.2 51,52.3 54,51.4 57,50.6 60,50.0 63,49.5 66,49.2 69,49.5 72,50.1 75,51.0 78,52.3 81,53.5 84,54.7 87,55.8 90,56.5 93,56.7 96,56.7 99,56.8 102,56.8 105,56.9 108,57.0 111,57.0 114,57.0 117,57.1 120,57.1 123,57.1 126,57.2 129,57.2 132,57.2 135,57.3 138,57.3 141,57.3 144,57.4 146,57.4 146,60.2 144,60.2 141,60.2 138,60.3 135,60.3 132,60.3 129,60.3 126,60.4 123,60.4 120,60.4 117,60.5 114,60.5 111,60.5 108,60.6 105,60.6 102,60.6 99,60.7 96,60.7 93,60.7 90,60.7 87,60.2 84,59.4 81,58.5 78,57.5 75,56.6 72,55.8 69,55.3 66,55.1 63,55.2 60,55.5 57,56.0 54,56.5 51,57.1 48,57.8 45,58.4 42,58.8 39,59.0 36,59.2 33,59.3 30,59.2 27,58.9 24,58.6 21,58.2 18,57.9 15,57.6 12,57.2 9,56.9 6,56.5 3,56.2 0,55.9" fill="rgb(182,182,182)"/>
<polygon points="0,55.6 3,55.9 6,56.2 9,56.6 12,56.9 15,57.3 18,57.6 21,57.9 24,58.3 27,58.6 30,58.9 33,59.0 36,58.9 39,58.7 42,58.5 45,58.1 48,57.5 51,56.8 54,56.2 57,55.7 60,55.2 63,54.9 66,54.8 69,55.0 72,55.5 75,56.3 78,57.2 81,58.2 84,59.1 87,59.9 90,60.4 93,60.4 96,60.4 99,60.4 102,60.3 105,60.3 108,60.3 111,60.2 114,60.2 117,60.2 120,60.1 123,60.1 126,60.1 129,60.0 132,60.0 135,60.0 138,60.0 141,59.9 144,59.9 146,59.9 146,62.5 144,62.5 141,62.6 138,62.6 135,62.7 132,62.8 129,62.9 126,63.0 123,63.1 120,63.2 117,63.3 114,63.3 111,63.4 108,63.5 105,63.6 102,63.7 99,63.9 96,64.0 93,64.1 90,64.2 87,63.9 84,63.3 81,62.7 78,62.0 75,61.3 72,60.7 69,60.3 66,60.0 63,60.1 60,60.3 57,60.5 54,60.9 51,61.3 48,61.7 45,62.0 42,62.2 39,62.2 36,62.3 33,62.2 30,62.0 27,61.6 24,61.3 21,60.9 18,60.5 15,60.1 12,59.7 9,59.3 6,58.9 3,58.5 0,58.2" fill="rgb(128,128,128)"/>
<polygon points="0,57.9 3,58.2 6,58.6 9,59.0 12,59.4 15,59.8 18,60.2 21,60.6 24,61.0 27,61.3 30,61.7 33,61.9 36,62.0 39,61.9 42,61.9 45,61.7 48,61.4 51,61.0 54,60.6 57,60.2 60,60.0 63,59.8 66,59.7 69,60.0 72,60.4 75,61.0 78,61.7 81,62.4 84,63.0 87,63.6 90,63.9 93,63.8 96,63.7 99,63.6 102,63.4 105,63.3 108,63.2 111,63.1 114,63.0 117,63.0 120,62.9 123,62.8 126,62.7 129,62.6 132,62.5 135,62.4 138,62.3 141,62.3 144,62.2 146,62.2 146,63.7 144,63.8 141,63.8 138,64.0 135,64.1 132,64.2 129,64.3 126,64.4 123,64.5 120,64.7 117,64.8 114,64.9 111,65.1 108,65.2 105,65.3 102,65.5 99,65.6 96,65.8 93,66.0 90,66.1 87,65.9 84,65.5 81,65.0 78,64.4 75,63.9 72,63.4 69,63.0 66,62.8 63,62.8 60,62.9 57,63.1 54,63.3 51,63.5 48,63.8 45,64.0 42,64.1 39,64.0 36,64.0 33,63.8 30,63.6 27,63.2 24,62.8 21,62.4 18,62.0 15,61.5 12,61.1 9,60.6 6,60.2 3,59.8 0,59.5" fill="rgb(98,98,98)"/>
<polygon points="0,59.2 3,59.5 6,59.9 9,60.3 12,60.8 15,61.2 18,61.7 21,62.1 24,62.5 27,62.9 30,63.3 33,63.5 36,63.7 39,63.7 42,63.8 45,63.7 48,63.5 51,63.2 54,63.0 57,62.8 60,62.6 63,62.5 66,62.5 69,62.7 72,63.1 75,63.6 78,64.1 81,64.7 84,65.2 87,65.6 90,65.8 93,65.7 96,65.5 99,65.3 102,65.2 105,65.0 108,64.9 111,64.8 114,64.6 117,64.5 120,64.4 123,64.2 126,64.1 129,64.0 132,63.9 135,63.8 138,63.7 141,63.5 144,63.5 146,63.4 146,64.8 144,64.9 141,65.0 138,65.1 135,65.3 132,65.4 129,65.6 126,65.7 123,65.9 120,66.0 117,66.2 114,66.4 111,66.5 108,66.7 105,66.8 102,67.0 99,67.2 96,67.5 93,67.7 90,67.9 87,67.8 84,67.5 81,67.1 78,66.7 75,66.2 72,65.8 69,65.5 66,65.3 63,65.2 60,65.3 57,65.4 54,65.5 51,65.6 48,65.7 45,65.8 42,65.8 39,65.6 36,65.5 33,65.3 30,65.0 27,64.6 24,64.1 21,63.7 18,63.3 15,62.8 12,62.3 9,61.9 6,61.4 3,60.9 0,60.6" fill="rgb(128,128,128)"/>
<polygon points="0,60.3 3,60.6 6,61.1 9,61.6 12,62.0 15,62.5 18,63.0 21,63.4 24,63.8 27,64.3 30,64.7 33,65.0 36,65.2 39,65.3 42,65.5 45,65.5 48,65.4 51,65.3 54,65.2 57,65.1 60,65.0 63,64.9 66,65.0 69,65.2 72,65.5 75,65.9 78,66.4 81,66.8 84,67.2 87,67.5 90,67.6 93,67.4 96,67.2 99,66.9 102,66.7 105,66.5 108,66.4 111,66.2 114,66.1 117,65.9 120,65.7 123,65.6 126,65.4 129,65.3 132,65.1 135,65.0 138,64.8 141,64.7 144,64.6 146,64.5 146,67.5 144,67.6 141,67.7 138,67.9 135,68.1 132,68.3 129,68.5 126,68.7 123,69.0 120,69.2 117,69.4 114,69.7 111,69.9 108,70.1 105,70.4 102,70.7 99,71.0 96,71.3 93,71.7 90,71.9 87,72.1 84,72.1 81,72.0 78,71.9 75,71.7 72,71.5 69,71.3 66,71.1 63,70.9 60,70.8 57,70.7 54,70.5 51,70.4 48,70.2 45,70.0 42,69.7 39,69.4 36,69.1 33,68.7 30,68.3 27,67.8 24,67.3 21,66.8 18,66.3 15,65.8 12,65.3 9,64.7 6,64.2 3,63.6 0,63.3" fill="rgb(78,78,78)"/>
<polygon points="0,63.0 3,63.3 6,63.9 9,64.4 12,65.0 15,65.5 18,66.0 21,66.5 24,67.0 27,67.5 30,68.0 33,68.4 36,68.8 39,69.1 42,69.4 45,69.7 48,69.9 51,70.1 54,70.2 57,70.4 60,70.5 63,70.6 66,70.8 69,71.0 72,71.2 75,71.4 78,71.6 81,71.7 84,71.8 87,71.8 90,71.6 93,71.4 96,71.0 99,70.7 102,70.4 105,70.1 108,69.8 111,69.6 114,69.4 117,69.1 120,68.9 123,68.7 126,68.4 129,68.2 132,68.0 135,67.8 138,67.6 141,67.4 144,67.3 146,67.2 146,68.4 144,68.5 141,68.6 138,68.8 135,69.1 132,69.3 129,69.5 126,69.8 123,70.0 120,70.3 117,70.5 114,70.8 111,71.0 108,71.3 105,71.6 102,71.9 99,72.2 96,72.6 93,73.0 90,73.3 87,73.5 84,73.6 81,73.6 78,73.6 75,73.5 72,73.4 69,73.2 66,73.0 63,72.8 60,72.7 57,72.5 54,72.2 51,72.0 48,71.7 45,71.4 42,71.1 39,70.7 36,70.3 33,69.8 30,69.4 27,68.8 24,68.3 21,67.8 18,67.3 15,66.8 12,66.2 9,65.7 6,65.1 3,64.5 0,64.2" fill="rgb(140,140,140)"/>
<polygon points="0,63.9 3,64.2 6,64.8 9,65.4 12,65.9 15,66.5 18,67.0 21,67.5 24,68.0 27,68.5 30,69.1 33,69.5 36,70.0 39,70.4 42,70.8 45,71.1 48,71.4 51,71.7 54,71.9 57,72.2 60,72.4 63,72.5 66,72.7 69,72.9 72,73.1 75,73.2 78,73.3 81,73.3 84,73.3 87,73.2 90,73.0 93,72.7 96,72.3 99,71.9 102,71.6 105,71.3 108,71.0 111,70.7 114,70.5 117,70.2 120,70.0 123,69.7 126,69.5 129,69.2 132,69.0 135,68.8 138,68.5 141,68.3 144,68.2 146,68.1 146,70.2 144,70.4 141,70.6 138,70.8 135,71.1 132,71.4 129,71.6 126,71.9 123,72.2 120,72.5 117,72.8 114,73.1 111,73.5 108,73.8 105,74.1 102,74.5 99,74.9 96,75.3 93,75.8 90,76.2 87,76.6 84,76.9 81,77.1 78,77.3 75,77.4 72,77.5 69,77.3 66,77.2 63,76.9 60,76.6 57,76.3 54,75.9 51,75.4 48,74.9 45,74.4 42,73.9 39,73.4 36,72.8 33,72.2 30,71.7 27,71.1 24,70.6 21,70.1 18,69.5 15,68.9 12,68.3 9,67.7 6,67.1 3,66.5 0,66.1" fill="rgb(100,100,100)"/>
<polygon points="0,65.8 3,66.2 6,66.8 9,67.4 12,68.0 15,68.6 18,69.2 21,69.8 24,70.3 27,70.8 30,71.4 33,71.9 36,72.5 39,73.1 42,73.6 45,74.1 48,74.6 51,75.1 54,75.6 57,76.0 60,76.3 63,76.6 66,76.9 69,77.0 72,77.2 75,77.1 78,77.0 81,76.8 84,76.6 87,76.3 90,75.9 93,75.5 96,75.0 99,74.6 102,74.2 105,73.8 108,73.5 111,73.2 114,72.8 117,72.5 120,72.2 123,71.9 126,71.6 129,71.3 132,71.1 135,70.8 138,70.5 141,70.3 144,70.1 146,69.9 146,75.9 144,76.1 141,76.3 138,76.5 135,76.8 132,77.1 129,77.3 126,77.6 123,77.9 120,78.2 117,78.5 114,78.8 111,79.2 108,79.5 105,79.8 102,80.2 99,80.6 96,81.0 93,81.5 90,81.9 87,82.3 84,82.6 81,82.8 78,83.0 75,83.1 72,83.2 69,83.0 66,82.9 63,82.6 60,82.3 57,82.0 54,81.6 51,81.1 48,80.6 45,80.1 42,79.6 39,79.1 36,78.5 33,77.9 30,77.4 27,76.8 24,76.3 21,75.8 18,75.2 15,74.6 12,74.0 9,73.4 6,72.8 3,72.2 0,71.8" fill="rgb(112,112,112)"/>
<polygon points="0,71.8 3,72.2 6,72.8 9,73.4 12,74.0 15,74.6 18,75.2 21,75.8 24,76.3 27,76.8 30,77.4 33,77.9 36,78.5 39,79.1 42,79.6 45,80.1 48,80.6 51,81.1 54,81.6 57,82.0 60,82.3 63,82.6 66,82.9 69,83.0 72,83.2 75,83.1 78,83.0 81,82.8 84,82.6 87,82.3 90,81.9 93,81.5 96,81.0 99,80.6 102,80.2 105,79.8 108,79.5 111,79.2 114,78.8 117,78.5 120,78.2 123,77.9 126,77.6 129,77.3 132,77.1 135,76.8 138,76.5 141,76.3 144,76.1 146,75.9 146,80.9 144,81.1 141,81.3 138,81.5 135,81.8 132,82.1 129,82.3 126,82.6 123,82.9 120,83.2 117,83.5 114,83.8 111,84.2 108,84.5 105,84.8 102,85.2 99,85.6 96,86.0 93,86.5 90,86.9 87,87.3 84,87.6 81,87.8 78,88.0 75,88.1 72,88.2 69,88.0 66,87.9 63,87.6 60,87.3 57,87.0 54,86.6 51,86.1 48,85.6 45,85.1 42,84.6 39,84.1 36,83.5 33,82.9 30,82.4 27,81.8 24,81.3 21,80.8 18,80.2 15,79.6 12,79.0 9,78.4 6,77.8 3,77.2 0,76.8" fill="rgb(90,90,90)"/>
<polygon points="0,76.8 3,77.2 6,77.8 9,78.4 12,79.0 15,79.6 18,80.2 21,80.8 24,81.3 27,81.8 30,82.4 33,82.9 36,83.5 39,84.1 42,84.6 45,85.1 48,85.6 51,86.1 54,86.6 57,87.0 60,87.3 63,87.6 66,87.9 69,88.0 72,88.2 75,88.1 78,88.0 81,87.8 84,87.6 87,87.3 90,86.9 93,86.5 96,86.0 99,85.6 102,85.2 105,84.8 108,84.5 111,84.2 114,83.8 117,83.5 120,83.2 123,82.9 126,82.6 129,82.3 132,82.1 135,81.8 138,81.5 141,81.3 144,81.1 146,80.9 146,86.9 144,87.1 141,87.3 138,87.5 135,87.8 132,88.1 129,88.3 126,88.6 123,88.9 120,89.2 117,89.5 114,89.8 111,90.2 108,90.5 105,90.8 102,91.2 99,91.6 96,92.0 93,92.5 90,92.9 87,93.3 84,93.6 81,93.8 78,94.0 75,94.1 72,94.2 69,94.0 66,93.9 63,93.6 60,93.3 57,93.0 54,92.6 51,92.1 48,91.6 45,91.1 42,90.6 39,90.1 36,89.5 33,88.9 30,88.4 27,87.8 24,87.3 21,86.8 18,86.2 15,85.6 12,85.0 9,84.4 6,83.8 3,83.2 0,82.8" fill="rgb(70,70,70)"/>
<polygon points="0,82.8 3,83.2 6,83.8 9,84.4 12,85.0 15,85.6 18,86.2 21,86.8 24,87.3 27,87.8 30,88.4 33,88.9 36,89.5 39,90.1 42,90.6 45,91.1 48,91.6 51,92.1 54,92.6 57,93.0 60,93.3 63,93.6 66,93.9 69,94.0 72,94.2 75,94.1 78,94.0 81,93.8 84,93.6 87,93.3 90,92.9 93,92.5 96,92.0 99,91.6 102,91.2 105,90.8 108,90.5 111,90.2 114,89.8 117,89.5 120,89.2 123,88.9 126,88.6 129,88.3 132,88.1 135,87.8 138,87.5 141,87.3 144,87.1 146,86.9 146,101.0 144,101.0 141,101.0 138,101.0 135,101.0 132,101.0 129,101.0 126,101.0 123,101.0 120,101.0 117,101.0 114,101.0 111,101.0 108,101.0 105,101.0 102,101.0 99,101.0 96,101.0 93,101.0 90,101.0 87,101.0 84,101.0 81,101.0 78,101.0 75,101.0 72,101.0 69,101.0 66,101.0 63,101.0 60,101.0 57,101.0 54,101.0 51,101.0 48,101.0 45,101.0 42,101.0 39,101.0 36,101.0 33,101.0 30,101.0 27,101.0 24,101.0 21,101.0 18,101.0 15,101.0 12,101.0 9,101.0 6,101.0 3,101.0 0,101.0" fill="rgb(50,50,50)"/>
<ellipse cx="62" cy="64" rx="26" ry="9" fill="#000" opacity=".2"/><ellipse cx="62" cy="64" rx="18.2" ry="6.8" fill="#000" opacity=".22"/>
<ellipse cx="68.2" cy="57.7" rx="1.9" ry="4.2" fill="#0c0c0c" opacity="0.9"/>
<ellipse cx="73.8" cy="58.8" rx="2.4" ry="4.6" fill="#0c0c0c" opacity="0.9"/>
<ellipse cx="56.8" cy="62.4" rx="2.2" ry="4.4" fill="#0c0c0c" opacity="0.9"/>
<ellipse cx="48.2" cy="64" rx="1.6" ry="3" fill="#0c0c0c" opacity="0.8"/>
<ellipse cx="52" cy="70" rx="2.6" ry="3.3" fill="#0c0c0c" opacity="0.9"/>
<ellipse cx="63" cy="55.5" rx="1.2" ry="2.2" fill="#0c0c0c" opacity="0.7"/>
<ellipse cx="44" cy="65" rx="1.2" ry="3" fill="#0c0c0c" opacity="0.5"/>
<ellipse cx="62" cy="66" rx="2" ry="5" fill="#0c0c0c" opacity="0.55"/>
<ellipse cx="79" cy="60" rx="1.5" ry="3" fill="#0c0c0c" opacity="0.5"/>
<ellipse cx="67" cy="68" rx="2" ry="4" fill="#0c0c0c" opacity="0.55"/>
<path d="M42 62 V74" stroke="#000" stroke-width=".9" opacity=".42"/>
<path d="M52.5 66 V84" stroke="#000" stroke-width=".9" opacity=".42"/>
<path d="M60 64 V80" stroke="#000" stroke-width=".9" opacity=".42"/>
<path d="M63.5 60 V78" stroke="#000" stroke-width=".9" opacity=".42"/>
<path d="M70 62 V80" stroke="#000" stroke-width=".9" opacity=".42"/>
<path d="M85 60 V78" stroke="#000" stroke-width=".9" opacity=".42"/>
<polyline points="0,65.8 3,66.2 6,66.8 9,67.4 12,68.0 15,68.6 18,69.2 21,69.8 24,70.3 27,70.8 30,71.4 33,71.9 36,72.5 39,73.1 42,73.6 45,74.1 48,74.6 51,75.1 54,75.6 57,76.0 60,76.3 63,76.6 66,76.9 69,77.0 72,77.2 75,77.1 78,77.0 81,76.8 84,76.6 87,76.3 90,75.9 93,75.5 96,75.0 99,74.6 102,74.2 105,73.8 108,73.5 111,73.2 114,72.8 117,72.5 120,72.2 123,71.9 126,71.6 129,71.3 132,71.1 135,70.8 138,70.5 141,70.3 144,70.1 146,69.9" fill="none" stroke="#ffffff" stroke-width="4.0" opacity="1"/>
<polyline points="0,53.7 3,53.9 6,54.2 9,54.4 12,54.7 15,55.0 18,55.3 21,55.6 24,55.8 27,56.1 30,56.4 33,56.4 36,56.1 39,55.7 42,55.3 45,54.7 48,53.8 51,52.9 54,52.0 57,51.2 60,50.6 63,50.1 66,49.8 69,50.1 72,50.7 75,51.6 78,52.9 81,54.1 84,55.3 87,56.4 90,57.1 93,57.3 96,57.3 99,57.4 102,57.4 105,57.5 108,57.6 111,57.6 114,57.6 117,57.7 120,57.7 123,57.7 126,57.8 129,57.8 132,57.8 135,57.9 138,57.9 141,57.9 144,58.0 146,58.0" fill="none" stroke="#d0d0d0" stroke-width="1.3" opacity="1"/>
<polyline points="0,46.4 2,46.4 4,46.3 6,46.3 8,46.2 10,46.2 12,46.2 14,46.1 16,46.1 18,46.0 20,46.0 22,46.0 24,45.9 26,45.9 28,45.8 30,45.8 32,45.8 34,45.7 36,45.7 38,45.6 40,45.6 42,45.5 44,45.5 46,45.4 48,45.4 50,45.3 52,45.3 54,45.3 56,45.2 58,45.2 60,45.1 62,45.1 64,45.1 66,45.1 68,45.1 70,45.1 72,45.2 74,45.2 76,45.3 78,45.3 80,45.3 82,45.4 84,45.4 86,45.5 88,45.5 90,45.6 92,45.6 94,45.7 96,45.7 98,45.8 100,45.8 102,45.9 104,46.0 106,46.1 108,46.2 110,46.3 112,46.4 114,46.5 116,46.6 118,46.7 120,46.8 122,46.9 124,46.9 126,47.0 128,47.1 130,47.2 132,47.3 134,47.4 136,47.5 138,47.6 140,47.7 142,47.8 144,47.9 146,47.9" fill="none" stroke="#5c5c5c" stroke-width="0.85" opacity="1"/>
</g>
<rect x="2.8" y="3.5" width="31.8" height="29" fill="none" stroke="#c4c4c4" stroke-width="1.2"/>
<rect x="2.8" y="5.5" width="31.8" height="21.8" fill="none" stroke="#ee1010" stroke-width="1.3"/>
<rect x="111.5" y="72.5" width="24" height="22" fill="none" stroke="#9a9a9a" stroke-width=".8"/>
<path d="M111.5 82.5 H136.0 M132.0 79.8 L136.0 82.5 L132.0 85.2" fill="none" stroke="#c8c8c8" stroke-width=".8"/>
<g font-family="Liberation Sans, sans-serif" font-size="11" fill="#dcdcdc"><text x="105.0" y="86.5" opacity=".75">T</text><text x="137.0" y="86.5">N</text></g>
<path d="M6 82 V94.4 H10.8" fill="none" stroke="#f4f4f4" stroke-width="2.1"/>
</svg>
<div class="dn" style="left:116px;top:1px">DN</div>
<div class="sc" style="left:8.2px;top:80.5px;letter-spacing:.1px">200 µm</div>
</div>
<div class="ext" style="left:501px">EXTRACTED TOMOGRAM</div>
<div class="tomo ex" style="left:653.5px;width:146px">
<svg class="a" style="left:-1px;top:-1px" width="146" height="100" viewBox="0 0 146 100">
<g filter="url(#sp)"><rect width="146" height="100" fill="#0a0a0a"/>
<polygon points="0,61.0 3,60.9 6,60.8 9,60.7 12,60.6 15,60.5 18,60.4 21,60.2 24,59.9 27,59.5 30,59.1 33,58.7 36,58.3 39,57.9 42,57.5 45,57.2 48,56.8 51,56.4 54,56.1 57,55.9 60,56.1 63,56.8 66,57.6 69,58.4 72,58.6 75,58.3 78,57.8 81,57.4 84,57.2 87,57.0 90,56.7 93,56.5 96,56.3 99,56.1 102,55.8 105,55.6 108,55.4 111,55.2 114,55.0 117,54.8 120,54.6 123,54.4 126,54.2 129,54.0 132,53.7 135,53.5 138,53.3 141,53.1 144,52.9 146,52.8 146,55.9 144,56.0 141,56.2 138,56.5 135,56.7 132,57.0 129,57.2 126,57.5 123,57.7 120,58.0 117,58.2 114,58.5 111,58.8 108,59.0 105,59.3 102,59.6 99,59.8 96,60.1 93,60.4 90,60.7 87,61.0 84,61.2 81,61.5 78,61.9 75,62.3 72,62.7 69,62.6 66,62.0 63,61.4 60,60.9 57,60.7 54,60.8 51,61.1 48,61.3 45,61.6 42,61.8 39,62.1 36,62.4 33,62.6 30,62.9 27,63.1 24,63.4 21,63.6 18,63.7 15,63.7 12,63.7 9,63.7 6,63.7 3,63.7 0,63.7" fill="rgb(214,214,214)"/>
<polygon points="0,63.4 3,63.4 6,63.4 9,63.4 12,63.4 15,63.4 18,63.4 21,63.3 24,63.1 27,62.8 30,62.6 33,62.3 36,62.1 39,61.8 42,61.5 45,61.3 48,61.0 51,60.8 54,60.5 57,60.4 60,60.6 63,61.1 66,61.7 69,62.3 72,62.4 75,62.0 78,61.6 81,61.2 84,60.9 87,60.7 90,60.4 93,60.1 96,59.8 99,59.5 102,59.3 105,59.0 108,58.7 111,58.5 114,58.2 117,57.9 120,57.7 123,57.4 126,57.2 129,56.9 132,56.7 135,56.4 138,56.2 141,55.9 144,55.7 146,55.6 146,58.5 144,58.6 141,58.8 138,59.1 135,59.4 132,59.7 129,59.9 126,60.2 123,60.5 120,60.8 117,61.0 114,61.4 111,61.7 108,62.0 105,62.3 102,62.7 99,63.0 96,63.3 93,63.7 90,64.0 87,64.3 84,64.6 81,64.9 78,65.3 75,65.7 72,66.1 69,66.1 66,65.6 63,65.2 60,64.9 57,64.7 54,64.8 51,65.0 48,65.1 45,65.3 42,65.4 39,65.6 36,65.7 33,65.9 30,66.0 27,66.1 24,66.2 21,66.3 18,66.3 15,66.3 12,66.2 9,66.1 6,66.0 3,65.9 0,65.8" fill="rgb(151,151,151)"/>
<polygon points="0,65.5 3,65.6 6,65.7 9,65.8 12,65.9 15,66.0 18,66.0 21,66.0 24,65.9 27,65.8 30,65.7 33,65.6 36,65.4 39,65.3 42,65.1 45,65.0 48,64.8 51,64.7 54,64.5 57,64.4 60,64.6 63,64.9 66,65.3 69,65.8 72,65.8 75,65.4 78,65.0 81,64.6 84,64.3 87,64.0 90,63.7 93,63.4 96,63.0 99,62.7 102,62.4 105,62.0 108,61.7 111,61.4 114,61.1 117,60.7 120,60.5 123,60.2 126,59.9 129,59.6 132,59.4 135,59.1 138,58.8 141,58.5 144,58.3 146,58.2 146,59.9 144,60.0 141,60.3 138,60.6 135,60.8 132,61.1 129,61.4 126,61.7 123,62.0 120,62.3 117,62.6 114,62.9 111,63.3 108,63.7 105,64.0 102,64.4 99,64.7 96,65.1 93,65.5 90,65.8 87,66.2 84,66.5 81,66.8 78,67.2 75,67.6 72,68.0 69,68.0 66,67.7 63,67.4 60,67.1 57,67.0 54,67.0 51,67.2 48,67.3 45,67.4 42,67.5 39,67.5 36,67.6 33,67.7 30,67.7 27,67.8 24,67.8 21,67.9 18,67.8 15,67.7 12,67.6 9,67.4 6,67.3 3,67.1 0,67.0" fill="rgb(115,115,115)"/>
<polygon points="0,66.7 3,66.8 6,67.0 9,67.1 12,67.3 15,67.4 18,67.5 21,67.6 24,67.5 27,67.5 30,67.4 33,67.4 36,67.3 39,67.2 42,67.2 45,67.1 48,67.0 51,66.9 54,66.7 57,66.7 60,66.8 63,67.1 66,67.4 69,67.7 72,67.7 75,67.3 78,66.9 81,66.5 84,66.2 87,65.9 90,65.5 93,65.2 96,64.8 99,64.4 102,64.1 105,63.7 108,63.4 111,63.0 114,62.6 117,62.3 120,62.0 123,61.7 126,61.4 129,61.1 132,60.8 135,60.5 138,60.3 141,60.0 144,59.7 146,59.6 146,61.2 144,61.3 141,61.6 138,61.9 135,62.2 132,62.5 129,62.8 126,63.1 123,63.4 120,63.7 117,64.0 114,64.4 111,64.7 108,65.1 105,65.5 102,65.9 99,66.3 96,66.7 93,67.1 90,67.5 87,67.8 84,68.2 81,68.5 78,68.9 75,69.3 72,69.7 69,69.7 66,69.5 63,69.3 60,69.1 57,69.0 54,69.0 51,69.1 48,69.2 45,69.2 42,69.3 39,69.3 36,69.3 33,69.3 30,69.3 27,69.3 24,69.3 21,69.2 18,69.1 15,69.0 12,68.8 9,68.6 6,68.4 3,68.2 0,68.1" fill="rgb(151,151,151)"/>
<polygon points="0,67.8 3,67.9 6,68.1 9,68.3 12,68.5 15,68.7 18,68.8 21,68.9 24,69.0 27,69.0 30,69.0 33,69.0 36,69.0 39,69.0 42,69.0 45,68.9 48,68.9 51,68.8 54,68.7 57,68.7 60,68.8 63,69.0 66,69.2 69,69.4 72,69.4 75,69.0 78,68.6 81,68.2 84,67.9 87,67.5 90,67.2 93,66.8 96,66.4 99,66.0 102,65.6 105,65.2 108,64.8 111,64.4 114,64.1 117,63.7 120,63.4 123,63.1 126,62.8 129,62.5 132,62.2 135,61.9 138,61.6 141,61.3 144,61.0 146,60.9 146,64.2 144,64.3 141,64.6 138,64.9 135,65.2 132,65.6 129,65.9 126,66.2 123,66.6 120,66.9 117,67.3 114,67.7 111,68.1 108,68.6 105,69.1 102,69.5 99,70.0 96,70.4 93,70.9 90,71.3 87,71.7 84,72.1 81,72.5 78,72.9 75,73.3 72,73.6 69,73.8 66,73.8 63,73.8 60,73.7 57,73.7 54,73.7 51,73.7 48,73.6 45,73.6 42,73.5 39,73.3 36,73.2 33,73.1 30,72.9 27,72.8 24,72.6 21,72.4 18,72.2 15,72.0 12,71.7 9,71.4 6,71.1 3,70.8 0,70.6" fill="rgb(92,92,92)"/>
<polygon points="0,70.3 3,70.5 6,70.8 9,71.1 12,71.4 15,71.7 18,71.9 21,72.1 24,72.3 27,72.5 30,72.6 33,72.8 36,72.9 39,73.0 42,73.2 45,73.3 48,73.3 51,73.4 54,73.4 57,73.4 60,73.4 63,73.5 66,73.5 69,73.5 72,73.3 75,73.0 78,72.6 81,72.2 84,71.8 87,71.4 90,71.0 93,70.6 96,70.1 99,69.7 102,69.2 105,68.8 108,68.3 111,67.8 114,67.4 117,67.0 120,66.6 123,66.3 126,65.9 129,65.6 132,65.3 135,64.9 138,64.6 141,64.3 144,64.0 146,63.9 146,65.2 144,65.3 141,65.6 138,65.9 135,66.3 132,66.6 129,67.0 126,67.3 123,67.7 120,68.0 117,68.4 114,68.8 111,69.3 108,69.8 105,70.2 102,70.7 99,71.2 96,71.7 93,72.2 90,72.6 87,73.1 84,73.5 81,73.9 78,74.2 75,74.6 72,75.0 69,75.2 66,75.2 63,75.3 60,75.3 57,75.3 54,75.2 51,75.2 48,75.1 45,75.0 42,74.9 39,74.7 36,74.5 33,74.3 30,74.1 27,73.9 24,73.7 21,73.5 18,73.3 15,73.0 12,72.7 9,72.3 6,72.0 3,71.7 0,71.4" fill="rgb(165,165,165)"/>
<polygon points="0,71.1 3,71.4 6,71.7 9,72.0 12,72.4 15,72.7 18,73.0 21,73.2 24,73.4 27,73.6 30,73.8 33,74.0 36,74.2 39,74.4 42,74.6 45,74.7 48,74.8 51,74.9 54,74.9 57,75.0 60,75.0 63,75.0 66,74.9 69,74.9 72,74.7 75,74.3 78,73.9 81,73.6 84,73.2 87,72.8 90,72.3 93,71.9 96,71.4 99,70.9 102,70.4 105,69.9 108,69.5 111,69.0 114,68.5 117,68.1 120,67.7 123,67.4 126,67.0 129,66.7 132,66.3 135,66.0 138,65.6 141,65.3 144,65.0 146,64.9 146,67.3 144,67.4 141,67.7 138,68.1 135,68.5 132,68.8 129,69.2 126,69.6 123,69.9 120,70.3 117,70.7 114,71.2 111,71.7 108,72.2 105,72.8 102,73.3 99,73.8 96,74.4 93,74.9 90,75.4 87,75.8 84,76.3 81,76.7 78,77.1 75,77.5 72,77.8 69,78.1 66,78.3 63,78.5 60,78.6 57,78.6 54,78.6 51,78.4 48,78.3 45,78.1 42,77.9 39,77.6 36,77.3 33,77.0 30,76.7 27,76.4 24,76.1 21,75.8 18,75.5 15,75.1 12,74.8 9,74.3 6,73.9 3,73.5 0,73.2" fill="rgb(118,118,118)"/>
<polygon points="0,72.9 3,73.2 6,73.6 9,74.0 12,74.5 15,74.8 18,75.2 21,75.5 24,75.8 27,76.1 30,76.4 33,76.7 36,77.0 39,77.3 42,77.6 45,77.8 48,78.0 51,78.1 54,78.3 57,78.3 60,78.3 63,78.2 66,78.0 69,77.8 72,77.5 75,77.2 78,76.8 81,76.4 84,76.0 87,75.5 90,75.1 93,74.6 96,74.1 99,73.5 102,73.0 105,72.5 108,71.9 111,71.4 114,70.9 117,70.4 120,70.0 123,69.6 126,69.3 129,68.9 132,68.5 135,68.2 138,67.8 141,67.4 144,67.1 146,67.0 146,73.0 144,73.1 141,73.4 138,73.8 135,74.2 132,74.5 129,74.9 126,75.3 123,75.6 120,76.0 117,76.4 114,76.9 111,77.4 108,77.9 105,78.5 102,79.0 99,79.5 96,80.1 93,80.6 90,81.1 87,81.5 84,82.0 81,82.4 78,82.8 75,83.2 72,83.5 69,83.8 66,84.0 63,84.2 60,84.3 57,84.3 54,84.3 51,84.1 48,84.0 45,83.8 42,83.6 39,83.3 36,83.0 33,82.7 30,82.4 27,82.1 24,81.8 21,81.5 18,81.2 15,80.8 12,80.5 9,80.0 6,79.6 3,79.2 0,78.9" fill="rgb(112,112,112)"/>
<polygon points="0,78.9 3,79.2 6,79.6 9,80.0 12,80.5 15,80.8 18,81.2 21,81.5 24,81.8 27,82.1 30,82.4 33,82.7 36,83.0 39,83.3 42,83.6 45,83.8 48,84.0 51,84.1 54,84.3 57,84.3 60,84.3 63,84.2 66,84.0 69,83.8 72,83.5 75,83.2 78,82.8 81,82.4 84,82.0 87,81.5 90,81.1 93,80.6 96,80.1 99,79.5 102,79.0 105,78.5 108,77.9 111,77.4 114,76.9 117,76.4 120,76.0 123,75.6 126,75.3 129,74.9 132,74.5 135,74.2 138,73.8 141,73.4 144,73.1 146,73.0 146,78.0 144,78.1 141,78.4 138,78.8 135,79.2 132,79.5 129,79.9 126,80.3 123,80.6 120,81.0 117,81.4 114,81.9 111,82.4 108,82.9 105,83.5 102,84.0 99,84.5 96,85.1 93,85.6 90,86.1 87,86.5 84,87.0 81,87.4 78,87.8 75,88.2 72,88.5 69,88.8 66,89.0 63,89.2 60,89.3 57,89.3 54,89.3 51,89.1 48,89.0 45,88.8 42,88.6 39,88.3 36,88.0 33,87.7 30,87.4 27,87.1 24,86.8 21,86.5 18,86.2 15,85.8 12,85.5 9,85.0 6,84.6 3,84.2 0,83.9" fill="rgb(90,90,90)"/>
<polygon points="0,83.9 3,84.2 6,84.6 9,85.0 12,85.5 15,85.8 18,86.2 21,86.5 24,86.8 27,87.1 30,87.4 33,87.7 36,88.0 39,88.3 42,88.6 45,88.8 48,89.0 51,89.1 54,89.3 57,89.3 60,89.3 63,89.2 66,89.0 69,88.8 72,88.5 75,88.2 78,87.8 81,87.4 84,87.0 87,86.5 90,86.1 93,85.6 96,85.1 99,84.5 102,84.0 105,83.5 108,82.9 111,82.4 114,81.9 117,81.4 120,81.0 123,80.6 126,80.3 129,79.9 132,79.5 135,79.2 138,78.8 141,78.4 144,78.1 146,78.0 146,84.0 144,84.1 141,84.4 138,84.8 135,85.2 132,85.5 129,85.9 126,86.3 123,86.6 120,87.0 117,87.4 114,87.9 111,88.4 108,88.9 105,89.5 102,90.0 99,90.5 96,91.1 93,91.6 90,92.1 87,92.5 84,93.0 81,93.4 78,93.8 75,94.2 72,94.5 69,94.8 66,95.0 63,95.2 60,95.3 57,95.3 54,95.3 51,95.1 48,95.0 45,94.8 42,94.6 39,94.3 36,94.0 33,93.7 30,93.4 27,93.1 24,92.8 21,92.5 18,92.2 15,91.8 12,91.5 9,91.0 6,90.6 3,90.2 0,89.9" fill="rgb(70,70,70)"/>
<polygon points="0,89.9 3,90.2 6,90.6 9,91.0 12,91.5 15,91.8 18,92.2 21,92.5 24,92.8 27,93.1 30,93.4 33,93.7 36,94.0 39,94.3 42,94.6 45,94.8 48,95.0 51,95.1 54,95.3 57,95.3 60,95.3 63,95.2 66,95.0 69,94.8 72,94.5 75,94.2 78,93.8 81,93.4 84,93.0 87,92.5 90,92.1 93,91.6 96,91.1 99,90.5 102,90.0 105,89.5 108,88.9 111,88.4 114,87.9 117,87.4 120,87.0 123,86.6 126,86.3 129,85.9 132,85.5 135,85.2 138,84.8 141,84.4 144,84.1 146,84.0 146,101.0 144,101.0 141,101.0 138,101.0 135,101.0 132,101.0 129,101.0 126,101.0 123,101.0 120,101.0 117,101.0 114,101.0 111,101.0 108,101.0 105,101.0 102,101.0 99,101.0 96,101.0 93,101.0 90,101.0 87,101.0 84,101.0 81,101.0 78,101.0 75,101.0 72,101.0 69,101.0 66,101.0 63,101.0 60,101.0 57,101.0 54,101.0 51,101.0 48,101.0 45,101.0 42,101.0 39,101.0 36,101.0 33,101.0 30,101.0 27,101.0 24,101.0 21,101.0 18,101.0 15,101.0 12,101.0 9,101.0 6,101.0 3,101.0 0,101.0" fill="rgb(50,50,50)"/>
<ellipse cx="47.5" cy="67" rx="2" ry="4.2" fill="#0c0c0c" opacity="0.5"/>
<ellipse cx="54" cy="65" rx="1.6" ry="4.5" fill="#0c0c0c" opacity="0.65"/>
<ellipse cx="59.5" cy="66" rx="1.6" ry="5" fill="#0c0c0c" opacity="0.6"/>
<ellipse cx="64" cy="67" rx="1.4" ry="4" fill="#0c0c0c" opacity="0.5"/>
<ellipse cx="92" cy="64" rx="3" ry="1.5" fill="#0c0c0c" opacity="0.6"/>
<ellipse cx="96.5" cy="64.3" rx="1.6" ry="1.6" fill="#0c0c0c" opacity="0.55"/>
<ellipse cx="50.5" cy="71" rx="1.8" ry="3" fill="#0c0c0c" opacity="0.5"/>
<path d="M46 68 V82" stroke="#000" stroke-width=".9" opacity=".42"/>
<path d="M50 68 V82" stroke="#000" stroke-width=".9" opacity=".42"/>
<path d="M54.5 66 V80" stroke="#000" stroke-width=".9" opacity=".42"/>
<path d="M59 66 V82" stroke="#000" stroke-width=".9" opacity=".42"/>
<path d="M63 66 V80" stroke="#000" stroke-width=".9" opacity=".42"/>
<polyline points="0,72.9 3,73.2 6,73.6 9,74.0 12,74.5 15,74.8 18,75.2 21,75.5 24,75.8 27,76.1 30,76.4 33,76.7 36,77.0 39,77.3 42,77.6 45,77.8 48,78.0 51,78.1 54,78.3 57,78.3 60,78.3 63,78.2 66,78.0 69,77.8 72,77.5 75,77.2 78,76.8 81,76.4 84,76.0 87,75.5 90,75.1 93,74.6 96,74.1 99,73.5 102,73.0 105,72.5 108,71.9 111,71.4 114,70.9 117,70.4 120,70.0 123,69.6 126,69.3 129,68.9 132,68.5 135,68.2 138,67.8 141,67.4 144,67.1 146,67.0" fill="none" stroke="#ffffff" stroke-width="4.0" opacity="1"/>
<polyline points="0,61.6 3,61.5 6,61.4 9,61.3 12,61.2 15,61.1 18,61.0 21,60.8 24,60.5 27,60.1 30,59.7 33,59.3 36,58.9 39,58.5 42,58.1 45,57.8 48,57.4 51,57.0 54,56.7 57,56.5 60,56.7 63,57.4 66,58.2 69,59.0 72,59.2 75,58.9 78,58.4 81,58.0 84,57.8 87,57.6 90,57.3 93,57.1 96,56.9 99,56.7 102,56.4 105,56.2 108,56.0 111,55.8 114,55.6 117,55.4 120,55.2 123,55.0 126,54.8 129,54.6 132,54.3 135,54.1 138,53.9 141,53.7 144,53.5 146,53.4" fill="none" stroke="#d0d0d0" stroke-width="1.3" opacity="1"/>
<polyline points="0,52.2 2,52.1 4,52.1 6,52.0 8,52.0 10,51.9 12,51.8 14,51.8 16,51.7 18,51.7 20,51.6 22,51.6 24,51.7 26,51.7 28,51.7 30,51.7 32,51.8 34,51.8 36,51.8 38,52.0 40,52.1 42,52.3 44,52.5 46,52.6 48,52.8 50,53.1 52,53.3 54,53.6 56,54.2 58,55.2 60,56.0 62,56.7 64,57.4 66,58.0 68,58.5 70,59.1 72,58.6 74,57.1 76,55.5 78,54.2 80,52.9 82,51.9 84,51.2 86,50.6 88,49.9 90,49.3 92,48.9 94,48.5 96,48.1 98,47.7 100,47.3 102,47.0 104,46.7 106,46.5 108,46.3 110,46.0 112,45.8 114,45.7 116,45.5 118,45.4 120,45.3 122,45.1 124,45.0 126,45.1 128,45.1 130,45.2 132,45.3 134,45.3 136,45.4 138,45.4 140,45.5 142,45.6 144,45.6 146,45.7" fill="none" stroke="#5c5c5c" stroke-width="1.3" opacity="1"/>
</g>
<rect x="2.8" y="3.5" width="31.8" height="29" fill="none" stroke="#c4c4c4" stroke-width="1.2"/>
<rect x="2.8" y="5.5" width="31.8" height="21.8" fill="none" stroke="#ee1010" stroke-width="1.3"/>
<rect x="111.5" y="72.5" width="24" height="22" fill="none" stroke="#9a9a9a" stroke-width=".8"/>
<path d="M111.5 82.5 H136.0 M132.0 79.8 L136.0 82.5 L132.0 85.2" fill="none" stroke="#c8c8c8" stroke-width=".8"/>
<g font-family="Liberation Sans, sans-serif" font-size="11" fill="#dcdcdc"><text x="105.0" y="86.5" opacity=".75">T</text><text x="137.0" y="86.5">N</text></g>
<path d="M6 82 V94.4 H10.8" fill="none" stroke="#f4f4f4" stroke-width="2.1"/>
</svg>
<div class="dn" style="left:116px;top:1px">DN</div>
<div class="sc" style="left:8.2px;top:80.5px;letter-spacing:.1px">200 µm</div>
</div>
<div class="ext" style="left:653.5px">EXTRACTED TOMOGRAM</div>
<div class="tomo ex" style="left:806px;width:146px">
<svg class="a" style="left:-1px;top:-1px" width="146" height="100" viewBox="0 0 146 100">
<g filter="url(#sp)"><rect width="146" height="100" fill="#0a0a0a"/>
<polygon points="0,57.4 3,57.4 6,57.5 9,57.5 12,57.5 15,57.6 18,57.6 21,57.6 24,57.6 27,57.7 30,57.7 33,57.7 36,57.8 39,57.8 42,57.8 45,57.8 48,57.8 51,57.8 54,57.8 57,57.9 60,58.1 63,58.5 66,59.2 69,59.8 72,59.6 75,58.9 78,58.2 81,57.7 84,57.4 87,57.4 90,57.4 93,57.4 96,57.4 99,57.4 102,57.4 105,57.5 108,57.6 111,57.6 114,57.7 117,57.7 120,57.8 123,57.8 126,57.9 129,57.9 132,57.9 135,57.9 138,58.0 141,58.0 144,58.0 146,58.0 146,61.0 144,61.0 141,61.0 138,61.1 135,61.1 132,61.1 129,61.1 126,61.2 123,61.2 120,61.3 117,61.3 114,61.4 111,61.4 108,61.4 105,61.5 102,61.5 99,61.6 96,61.6 93,61.7 90,61.8 87,61.8 84,61.9 81,62.1 78,62.6 75,63.2 72,63.8 69,63.9 66,63.4 63,62.9 60,62.5 57,62.2 54,62.1 51,62.1 48,62.0 45,62.0 42,61.9 39,61.8 36,61.7 33,61.6 30,61.5 27,61.3 24,61.2 21,61.1 18,60.9 15,60.8 12,60.7 9,60.5 6,60.3 3,60.2 0,60.1" fill="rgb(209,209,209)"/>
<polygon points="0,59.8 3,59.9 6,60.0 9,60.2 12,60.4 15,60.5 18,60.6 21,60.8 24,60.9 27,61.0 30,61.2 33,61.3 36,61.4 39,61.5 42,61.6 45,61.7 48,61.7 51,61.8 54,61.8 57,61.9 60,62.2 63,62.6 66,63.1 69,63.6 72,63.5 75,62.9 78,62.3 81,61.8 84,61.6 87,61.5 90,61.5 93,61.4 96,61.3 99,61.3 102,61.2 105,61.2 108,61.1 111,61.1 114,61.1 117,61.0 120,61.0 123,60.9 126,60.9 129,60.8 132,60.8 135,60.8 138,60.8 141,60.7 144,60.7 146,60.7 146,63.5 144,63.5 141,63.5 138,63.6 135,63.6 132,63.7 129,63.8 126,63.9 123,64.0 120,64.1 117,64.3 114,64.4 111,64.5 108,64.7 105,64.8 102,64.9 99,65.0 96,65.2 93,65.3 90,65.4 87,65.5 84,65.6 81,65.9 78,66.3 75,66.8 72,67.2 69,67.3 66,66.9 63,66.5 60,66.1 57,65.9 54,65.8 51,65.7 48,65.5 45,65.4 42,65.3 39,65.1 36,64.9 33,64.8 30,64.6 27,64.4 24,64.2 21,63.9 18,63.7 15,63.5 12,63.2 9,62.9 6,62.7 3,62.4 0,62.3" fill="rgb(147,147,147)"/>
<polygon points="0,62.0 3,62.1 6,62.4 9,62.6 12,62.9 15,63.2 18,63.4 21,63.6 24,63.9 27,64.1 30,64.3 33,64.5 36,64.6 39,64.8 42,65.0 45,65.1 48,65.2 51,65.4 54,65.5 57,65.6 60,65.8 63,66.2 66,66.6 69,67.0 72,66.9 75,66.5 78,66.0 81,65.6 84,65.3 87,65.2 90,65.1 93,65.0 96,64.9 99,64.7 102,64.6 105,64.5 108,64.4 111,64.2 114,64.1 117,64.0 120,63.8 123,63.7 126,63.6 129,63.5 132,63.4 135,63.3 138,63.3 141,63.2 144,63.2 146,63.2 146,64.9 144,64.9 141,64.9 138,64.9 135,65.0 132,65.1 129,65.2 126,65.4 123,65.6 120,65.7 117,65.9 114,66.1 111,66.3 108,66.4 105,66.6 102,66.8 99,66.9 96,67.1 93,67.3 90,67.5 87,67.6 84,67.7 81,68.0 78,68.3 75,68.8 72,69.1 69,69.2 66,68.9 63,68.5 60,68.2 57,68.0 54,67.8 51,67.7 48,67.5 45,67.3 42,67.2 39,67.0 36,66.8 33,66.5 30,66.3 27,66.1 24,65.8 21,65.5 18,65.2 15,64.9 12,64.6 9,64.3 6,64.0 3,63.7 0,63.4" fill="rgb(112,112,112)"/>
<polygon points="0,63.1 3,63.4 6,63.7 9,64.0 12,64.3 15,64.6 18,64.9 21,65.2 24,65.5 27,65.8 30,66.0 33,66.2 36,66.5 39,66.7 42,66.9 45,67.0 48,67.2 51,67.4 54,67.5 57,67.7 60,67.9 63,68.2 66,68.6 69,68.9 72,68.8 75,68.5 78,68.0 81,67.7 84,67.4 87,67.3 90,67.2 93,67.0 96,66.8 99,66.6 102,66.5 105,66.3 108,66.1 111,66.0 114,65.8 117,65.6 120,65.4 123,65.3 126,65.1 129,64.9 132,64.8 135,64.7 138,64.6 141,64.6 144,64.6 146,64.6 146,66.1 144,66.1 141,66.1 138,66.2 135,66.3 132,66.4 129,66.5 126,66.7 123,67.0 120,67.2 117,67.4 114,67.6 111,67.8 108,68.0 105,68.3 102,68.5 99,68.7 96,68.9 93,69.1 90,69.3 87,69.4 84,69.6 81,69.8 78,70.2 75,70.5 72,70.9 69,70.9 66,70.6 63,70.3 60,70.0 57,69.8 54,69.6 51,69.5 48,69.3 45,69.1 42,68.9 39,68.6 36,68.4 33,68.1 30,67.9 27,67.6 24,67.3 21,66.9 18,66.6 15,66.3 12,65.9 9,65.5 6,65.1 3,64.8 0,64.5" fill="rgb(147,147,147)"/>
<polygon points="0,64.2 3,64.5 6,64.8 9,65.2 12,65.6 15,66.0 18,66.3 21,66.6 24,67.0 27,67.3 30,67.6 33,67.8 36,68.1 39,68.3 42,68.6 45,68.8 48,69.0 51,69.2 54,69.3 57,69.5 60,69.7 63,70.0 66,70.3 69,70.6 72,70.6 75,70.2 78,69.9 81,69.5 84,69.3 87,69.1 90,69.0 93,68.8 96,68.6 99,68.4 102,68.2 105,68.0 108,67.7 111,67.5 114,67.3 117,67.1 120,66.9 123,66.7 126,66.4 129,66.2 132,66.1 135,66.0 138,65.9 141,65.8 144,65.8 146,65.8 146,69.0 144,69.0 141,69.0 138,69.1 135,69.2 132,69.4 129,69.6 126,69.9 123,70.2 120,70.5 117,70.8 114,71.2 111,71.5 108,71.8 105,72.1 102,72.4 99,72.7 96,73.0 93,73.3 90,73.5 87,73.8 84,74.0 81,74.2 78,74.5 75,74.7 72,74.9 69,74.9 66,74.7 63,74.5 60,74.3 57,74.1 54,73.9 51,73.6 48,73.4 45,73.1 42,72.8 39,72.5 36,72.2 33,71.8 30,71.5 27,71.1 24,70.7 21,70.3 18,69.8 15,69.4 12,68.9 9,68.4 6,67.9 3,67.4 0,67.0" fill="rgb(89,89,89)"/>
<polygon points="0,66.7 3,67.1 6,67.6 9,68.1 12,68.6 15,69.1 18,69.5 21,70.0 24,70.4 27,70.8 30,71.2 33,71.5 36,71.9 39,72.2 42,72.5 45,72.8 48,73.1 51,73.3 54,73.6 57,73.8 60,74.0 63,74.2 66,74.4 69,74.6 72,74.6 75,74.4 78,74.2 81,73.9 84,73.7 87,73.5 90,73.2 93,73.0 96,72.7 99,72.4 102,72.1 105,71.8 108,71.5 111,71.2 114,70.9 117,70.5 120,70.2 123,69.9 126,69.6 129,69.3 132,69.1 135,68.9 138,68.8 141,68.7 144,68.7 146,68.7 146,70.0 144,70.0 141,70.0 138,70.1 135,70.2 132,70.4 129,70.6 126,71.0 123,71.3 120,71.6 117,72.0 114,72.3 111,72.7 108,73.1 105,73.4 102,73.7 99,74.1 96,74.4 93,74.7 90,75.0 87,75.2 84,75.4 81,75.6 78,75.9 75,76.1 72,76.3 69,76.3 66,76.1 63,75.9 60,75.7 57,75.5 54,75.3 51,75.0 48,74.8 45,74.5 42,74.2 39,73.8 36,73.5 33,73.1 30,72.7 27,72.3 24,71.8 21,71.4 18,70.9 15,70.4 12,69.9 9,69.3 6,68.8 3,68.2 0,67.9" fill="rgb(161,161,161)"/>
<polygon points="0,67.6 3,67.9 6,68.5 9,69.0 12,69.6 15,70.1 18,70.6 21,71.1 24,71.5 27,72.0 30,72.4 33,72.8 36,73.2 39,73.5 42,73.9 45,74.2 48,74.5 51,74.7 54,75.0 57,75.2 60,75.4 63,75.6 66,75.8 69,76.0 72,76.0 75,75.8 78,75.6 81,75.3 84,75.1 87,74.9 90,74.7 93,74.4 96,74.1 99,73.8 102,73.4 105,73.1 108,72.8 111,72.4 114,72.0 117,71.7 120,71.3 123,71.0 126,70.7 129,70.3 132,70.1 135,69.9 138,69.8 141,69.7 144,69.7 146,69.7 146,72.0 144,72.0 141,72.1 138,72.2 135,72.3 132,72.5 129,72.8 126,73.2 123,73.6 120,74.0 117,74.4 114,74.9 111,75.3 108,75.7 105,76.2 102,76.6 99,77.0 96,77.3 93,77.7 90,78.0 87,78.3 84,78.5 81,78.8 78,78.9 75,79.1 72,79.2 69,79.1 66,79.1 63,78.9 60,78.8 57,78.6 54,78.3 51,78.0 48,77.7 45,77.4 42,77.0 39,76.6 36,76.2 33,75.7 30,75.3 27,74.8 24,74.3 21,73.8 18,73.2 15,72.6 12,72.0 9,71.4 6,70.7 3,70.1 0,69.7" fill="rgb(114,114,114)"/>
<polygon points="0,69.4 3,69.8 6,70.4 9,71.1 12,71.7 15,72.3 18,72.9 21,73.5 24,74.0 27,74.5 30,75.0 33,75.4 36,75.9 39,76.3 42,76.7 45,77.1 48,77.4 51,77.7 54,78.0 57,78.3 60,78.5 63,78.6 66,78.8 69,78.8 72,78.9 75,78.8 78,78.6 81,78.5 84,78.2 87,78.0 90,77.7 93,77.4 96,77.0 99,76.7 102,76.3 105,75.9 108,75.4 111,75.0 114,74.6 117,74.1 120,73.7 123,73.3 126,72.9 129,72.5 132,72.2 135,72.0 138,71.9 141,71.8 144,71.7 146,71.7 146,77.7 144,77.7 141,77.8 138,77.9 135,78.0 132,78.2 129,78.5 126,78.9 123,79.3 120,79.7 117,80.1 114,80.6 111,81.0 108,81.4 105,81.9 102,82.3 99,82.7 96,83.0 93,83.4 90,83.7 87,84.0 84,84.2 81,84.5 78,84.6 75,84.8 72,84.9 69,84.8 66,84.8 63,84.6 60,84.5 57,84.3 54,84.0 51,83.7 48,83.4 45,83.1 42,82.7 39,82.3 36,81.9 33,81.4 30,81.0 27,80.5 24,80.0 21,79.5 18,78.9 15,78.3 12,77.7 9,77.1 6,76.4 3,75.8 0,75.4" fill="rgb(112,112,112)"/>
<polygon points="0,75.4 3,75.8 6,76.4 9,77.1 12,77.7 15,78.3 18,78.9 21,79.5 24,80.0 27,80.5 30,81.0 33,81.4 36,81.9 39,82.3 42,82.7 45,83.1 48,83.4 51,83.7 54,84.0 57,84.3 60,84.5 63,84.6 66,84.8 69,84.8 72,84.9 75,84.8 78,84.6 81,84.5 84,84.2 87,84.0 90,83.7 93,83.4 96,83.0 99,82.7 102,82.3 105,81.9 108,81.4 111,81.0 114,80.6 117,80.1 120,79.7 123,79.3 126,78.9 129,78.5 132,78.2 135,78.0 138,77.9 141,77.8 144,77.7 146,77.7 146,82.7 144,82.7 141,82.8 138,82.9 135,83.0 132,83.2 129,83.5 126,83.9 123,84.3 120,84.7 117,85.1 114,85.6 111,86.0 108,86.4 105,86.9 102,87.3 99,87.7 96,88.0 93,88.4 90,88.7 87,89.0 84,89.2 81,89.5 78,89.6 75,89.8 72,89.9 69,89.8 66,89.8 63,89.6 60,89.5 57,89.3 54,89.0 51,88.7 48,88.4 45,88.1 42,87.7 39,87.3 36,86.9 33,86.4 30,86.0 27,85.5 24,85.0 21,84.5 18,83.9 15,83.3 12,82.7 9,82.1 6,81.4 3,80.8 0,80.4" fill="rgb(90,90,90)"/>
<polygon points="0,80.4 3,80.8 6,81.4 9,82.1 12,82.7 15,83.3 18,83.9 21,84.5 24,85.0 27,85.5 30,86.0 33,86.4 36,86.9 39,87.3 42,87.7 45,88.1 48,88.4 51,88.7 54,89.0 57,89.3 60,89.5 63,89.6 66,89.8 69,89.8 72,89.9 75,89.8 78,89.6 81,89.5 84,89.2 87,89.0 90,88.7 93,88.4 96,88.0 99,87.7 102,87.3 105,86.9 108,86.4 111,86.0 114,85.6 117,85.1 120,84.7 123,84.3 126,83.9 129,83.5 132,83.2 135,83.0 138,82.9 141,82.8 144,82.7 146,82.7 146,88.7 144,88.7 141,88.8 138,88.9 135,89.0 132,89.2 129,89.5 126,89.9 123,90.3 120,90.7 117,91.1 114,91.6 111,92.0 108,92.4 105,92.9 102,93.3 99,93.7 96,94.0 93,94.4 90,94.7 87,95.0 84,95.2 81,95.5 78,95.6 75,95.8 72,95.9 69,95.8 66,95.8 63,95.6 60,95.5 57,95.3 54,95.0 51,94.7 48,94.4 45,94.1 42,93.7 39,93.3 36,92.9 33,92.4 30,92.0 27,91.5 24,91.0 21,90.5 18,89.9 15,89.3 12,88.7 9,88.1 6,87.4 3,86.8 0,86.4" fill="rgb(70,70,70)"/>
<polygon points="0,86.4 3,86.8 6,87.4 9,88.1 12,88.7 15,89.3 18,89.9 21,90.5 24,91.0 27,91.5 30,92.0 33,92.4 36,92.9 39,93.3 42,93.7 45,94.1 48,94.4 51,94.7 54,95.0 57,95.3 60,95.5 63,95.6 66,95.8 69,95.8 72,95.9 75,95.8 78,95.6 81,95.5 84,95.2 87,95.0 90,94.7 93,94.4 96,94.0 99,93.7 102,93.3 105,92.9 108,92.4 111,92.0 114,91.6 117,91.1 120,90.7 123,90.3 126,89.9 129,89.5 132,89.2 135,89.0 138,88.9 141,88.8 144,88.7 146,88.7 146,101.0 144,101.0 141,101.0 138,101.0 135,101.0 132,101.0 129,101.0 126,101.0 123,101.0 120,101.0 117,101.0 114,101.0 111,101.0 108,101.0 105,101.0 102,101.0 99,101.0 96,101.0 93,101.0 90,101.0 87,101.0 84,101.0 81,101.0 78,101.0 75,101.0 72,101.0 69,101.0 66,101.0 63,101.0 60,101.0 57,101.0 54,101.0 51,101.0 48,101.0 45,101.0 42,101.0 39,101.0 36,101.0 33,101.0 30,101.0 27,101.0 24,101.0 21,101.0 18,101.0 15,101.0 12,101.0 9,101.0 6,101.0 3,101.0 0,101.0" fill="rgb(50,50,50)"/>
<ellipse cx="45.5" cy="65.5" rx="3.2" ry="3.4" fill="#0c0c0c" opacity="0.7"/>
<ellipse cx="52" cy="68" rx="2.2" ry="3.5" fill="#0c0c0c" opacity="0.55"/>
<ellipse cx="60.5" cy="65.5" rx="4.2" ry="3.2" fill="#0c0c0c" opacity="0.7"/>
<ellipse cx="67" cy="64.5" rx="1.6" ry="1.8" fill="#0c0c0c" opacity="0.6"/>
<ellipse cx="82" cy="66" rx="5" ry="2.2" fill="#0c0c0c" opacity="0.5"/>
<ellipse cx="92" cy="66" rx="4" ry="2" fill="#0c0c0c" opacity="0.5"/>
<ellipse cx="55.5" cy="70" rx="1.2" ry="3.4" fill="#0c0c0c" opacity="0.6"/>
<path d="M43 66 V78" stroke="#000" stroke-width=".9" opacity=".42"/>
<path d="M55.5 68 V80" stroke="#000" stroke-width=".9" opacity=".42"/>
<path d="M48 66 V76" stroke="#000" stroke-width=".9" opacity=".42"/>
<polyline points="0,69.4 3,69.8 6,70.4 9,71.1 12,71.7 15,72.3 18,72.9 21,73.5 24,74.0 27,74.5 30,75.0 33,75.4 36,75.9 39,76.3 42,76.7 45,77.1 48,77.4 51,77.7 54,78.0 57,78.3 60,78.5 63,78.6 66,78.8 69,78.8 72,78.9 75,78.8 78,78.6 81,78.5 84,78.2 87,78.0 90,77.7 93,77.4 96,77.0 99,76.7 102,76.3 105,75.9 108,75.4 111,75.0 114,74.6 117,74.1 120,73.7 123,73.3 126,72.9 129,72.5 132,72.2 135,72.0 138,71.9 141,71.8 144,71.7 146,71.7" fill="none" stroke="#ffffff" stroke-width="4.0" opacity="1"/>
<polyline points="0,58.0 3,58.0 6,58.1 9,58.1 12,58.1 15,58.2 18,58.2 21,58.2 24,58.2 27,58.3 30,58.3 33,58.3 36,58.4 39,58.4 42,58.4 45,58.4 48,58.4 51,58.4 54,58.4 57,58.5 60,58.7 63,59.1 66,59.8 69,60.4 72,60.2 75,59.5 78,58.8 81,58.3 84,58.0 87,58.0 90,58.0 93,58.0 96,58.0 99,58.0 102,58.0 105,58.1 108,58.2 111,58.2 114,58.3 117,58.3 120,58.4 123,58.4 126,58.5 129,58.5 132,58.5 135,58.5 138,58.6 141,58.6 144,58.6 146,58.6" fill="none" stroke="#d0d0d0" stroke-width="1.3" opacity="1"/>
<polyline points="0,47.4 2,47.4 4,47.5 6,47.5 8,47.5 10,47.5 12,47.6 14,47.6 16,47.7 18,47.8 20,47.9 22,48.0 24,48.1 26,48.2 28,48.3 30,48.5 32,48.8 34,49.2 36,49.6 38,49.9 40,50.3 42,50.8 44,51.3 46,51.8 48,52.3 50,52.8 52,53.3 54,54.0 56,54.7 58,55.4 60,56.2 62,57.1 64,57.9 66,58.6 68,59.5 70,60.1 72,59.4 74,58.3 76,57.3 78,56.3 80,55.4 82,54.5 84,53.7 86,52.8 88,52.2 90,51.6 92,50.9 94,50.3 96,49.8 98,49.5 100,49.1 102,48.7 104,48.4 106,48.1 108,47.9 110,47.7 112,47.5 114,47.4 116,47.2 118,47.1 120,47.2 122,47.2 124,47.3 126,47.3 128,47.4 130,47.6 132,47.8 134,48.0 136,48.2 138,48.4 140,48.6 142,48.6 144,48.6 146,48.6" fill="none" stroke="#5c5c5c" stroke-width="0.85" opacity="1"/>
<rect x="141" width="10" height="100" fill="#000"/>
</g>
<rect x="2.8" y="3.5" width="31.8" height="29" fill="none" stroke="#c4c4c4" stroke-width="1.2"/>
<rect x="2.8" y="7.5" width="31.8" height="21.8" fill="none" stroke="#ee1010" stroke-width="1.3"/>
<rect x="111.5" y="72.5" width="24" height="22" fill="none" stroke="#9a9a9a" stroke-width=".8"/>
<path d="M111.5 82.5 H136.0 M132.0 79.8 L136.0 82.5 L132.0 85.2" fill="none" stroke="#c8c8c8" stroke-width=".8"/>
<g font-family="Liberation Sans, sans-serif" font-size="11" fill="#dcdcdc"><text x="105.0" y="86.5" opacity=".75">T</text><text x="137.0" y="86.5">N</text></g>
<path d="M6 82 V94.4 H10.8" fill="none" stroke="#f4f4f4" stroke-width="2.1"/>
</svg>
<div class="dn" style="left:116px;top:1px">DN</div>
<div class="sc" style="left:8.2px;top:80.5px;letter-spacing:.1px">200 µm</div>
</div>
<div class="ext" style="left:806px">EXTRACTED TOMOGRAM</div>
<div class="dd" style="left:54px;top:473px;width:164px">Full retina thickness</div>
<svg class="chev" style="left:203px;top:479.5px" viewBox="0 0 9 6"><path d="M0.6 0.8 L4.5 5 L8.4 0.8" fill="none" stroke="#b4b4b4" stroke-width="1.2"/></svg>
<svg class="a" style="left:0;top:488px" width="500" height="142" viewBox="0 488 500 142">
<rect x="41" y="492" width="443.5" height="112" fill="#ffe1ff"/>
<rect x="41" y="556.5" width="443.5" height="10.3" fill="#ffffa5"/>
<rect x="41" y="557.6" width="443.5" height="8.2" fill="#66ff66"/>
<rect x="41" y="566.8" width="443.5" height="37.2" fill="#fb6363"/>
<path d="M41 510.3 H484.5" stroke="#9a9a9a" stroke-width=".8" stroke-dasharray="2.2 1.6" opacity=".85"/>
<path d="M41 529 H484.5" stroke="#9a9a9a" stroke-width=".8" stroke-dasharray="2.2 1.6" opacity=".85"/>
<path d="M41 547.7 H484.5" stroke="#9a9a9a" stroke-width=".8" stroke-dasharray="2.2 1.6" opacity=".85"/>
<path d="M41 566.3 H484.5" stroke="#9a9a9a" stroke-width=".8" stroke-dasharray="2.2 1.6" opacity=".85"/>
<path d="M41 585 H484.5" stroke="#9a9a9a" stroke-width=".8" stroke-dasharray="2.2 1.6" opacity=".85"/>
<path d="M40.5 491.5 V604.5 H484.5" fill="none" stroke="#050505" stroke-width="1"/>
<path d="M115.5 604.5 V608.5" stroke="#050505" stroke-width="1"/>
<path d="M190.3 604.5 V608.5" stroke="#050505" stroke-width="1"/>
<path d="M265.2 604.5 V608.5" stroke="#050505" stroke-width="1"/>
<path d="M340.2 604.5 V608.5" stroke="#050505" stroke-width="1"/>
<path d="M415.3 604.5 V608.5" stroke="#050505" stroke-width="1"/>
<polyline points="78,564.5 91.4,565 104,565 143,564.4 272.3,562.7 291,562.4 322.5,563 362.6,558 380,558.6 386,560 393.2,560.3 401.8,561 406.5,561 412.5,560.6 419,561 422,561 430,559.8 436,559 443.7,559.6 451.6,562 460,563.2 466,563.2 471.7,563.2" fill="none" stroke="#4a86c8" stroke-width="1" stroke-dasharray="2.4 1.8"/>
<circle cx="78" cy="564.5" r="2.9" fill="#9a96a6"/>
<circle cx="91.4" cy="565" r="2.9" fill="#9a96a6"/>
<circle cx="104" cy="565" r="2.9" fill="#9a96a6"/>
<circle cx="143" cy="564.4" r="2.9" fill="#9a96a6"/>
<circle cx="272.3" cy="562.7" r="2.9" fill="#9a96a6"/>
<circle cx="291" cy="562.4" r="2.9" fill="#9a96a6"/>
<circle cx="322.5" cy="563" r="2.9" fill="#9a96a6"/>
<circle cx="386" cy="560" r="2.9" fill="#9a96a6"/>
<circle cx="393.2" cy="560.3" r="2.9" fill="#9a96a6"/>
<circle cx="401.8" cy="561" r="2.9" fill="#9a96a6"/>
<circle cx="406.5" cy="561" r="2.9" fill="#9a96a6"/>
<circle cx="412.5" cy="560.6" r="2.9" fill="#9a96a6"/>
<circle cx="419" cy="561" r="2.9" fill="#9a96a6"/>
<circle cx="422" cy="561" r="2.9" fill="#9a96a6"/>
<circle cx="436" cy="559" r="2.9" fill="#9a96a6"/>
<circle cx="460" cy="563.2" r="2.9" fill="#9a96a6"/>
<circle cx="471.7" cy="563.2" r="2.9" fill="#9a96a6"/>
<circle cx="362.6" cy="558" r="2.9" fill="#080808"/><path d="M361.0 558 H364.20000000000005" stroke="#4a86c8" stroke-width=".8" stroke-dasharray="1.2 .8"/>
<circle cx="380" cy="558.6" r="2.9" fill="#080808"/><path d="M378.4 558.6 H381.6" stroke="#4a86c8" stroke-width=".8" stroke-dasharray="1.2 .8"/>
<circle cx="430" cy="559.8" r="2.9" fill="#080808"/><path d="M428.4 559.8 H431.6" stroke="#4a86c8" stroke-width=".8" stroke-dasharray="1.2 .8"/>
<circle cx="443.7" cy="559.6" r="2.9" fill="#080808"/><path d="M442.09999999999997 559.6 H445.3" stroke="#4a86c8" stroke-width=".8" stroke-dasharray="1.2 .8"/>
<circle cx="451.6" cy="562" r="2.9" fill="#080808"/><path d="M450.0 562 H453.20000000000005" stroke="#4a86c8" stroke-width=".8" stroke-dasharray="1.2 .8"/>
<circle cx="466" cy="563.2" r="2.9" fill="#080808"/><path d="M464.4 563.2 H467.6" stroke="#4a86c8" stroke-width=".8" stroke-dasharray="1.2 .8"/>
<g font-family="Liberation Sans, sans-serif" font-size="10.5" fill="#e2e2e2">
<text x="37.5" y="500.09999999999997" text-anchor="end">750</text>
<text x="37.5" y="514.5" text-anchor="end">625</text>
<text x="37.5" y="533.3000000000001" text-anchor="end">500</text>
<text x="37.5" y="551.9000000000001" text-anchor="end">375</text>
<text x="37.5" y="569.9000000000001" text-anchor="end">250</text>
<text x="37.5" y="589.0" text-anchor="end">125</text>
<text x="37.5" y="603.0" text-anchor="end">0µm</text>
<text x="115.5" y="619.2" text-anchor="middle">2016-06</text>
<text x="190.3" y="619.2" text-anchor="middle">2017-06</text>
<text x="265.2" y="619.2" text-anchor="middle">2018-06</text>
<text x="340.2" y="619.2" text-anchor="middle">2019-06</text>
<text x="415.3" y="619.2" text-anchor="middle">2020-06</text>
</g></svg>
<table><tr><td style="width:169px;vertical-align:top;height:29px;line-height:14.5px;letter-spacing:-.42px">ILM - OS/RPE measurements</td>
<td class="h">2019<br>09-18</td>
<td class="h">2019<br>12-12</td>
<td class="h">2020<br>08-13</td>
<td class="h">2020<br>10-19</td>
<td class="h">2020<br>11-26</td>
<td class="h">2021<br>02-04</td>
</tr>
<tr><td>Minimum in Fovea [µm]</td><td class="c p">485</td><td class="c p">472</td><td class="c p">411</td><td class="c p">392</td><td class="c p">312</td><td class="c p">307</td></tr>
<tr><td>Central sector [µm]</td><td class="c p">562</td><td class="c p">529</td><td class="c p">472</td><td class="c p">496</td><td class="c p">335</td><td class="c p">332</td></tr>
<tr><td>Area thickness [µm]</td><td class="c y">305</td><td class="c g">301</td><td class="c g">292</td><td class="c g">295</td><td class="c g">279</td><td class="c g">274</td></tr>
<tr><td>Volume [mm³]</td><td class="c y">8,62</td><td class="c g">8,52</td><td class="c g">8,26</td><td class="c g">8,34</td><td class="c g">7,89</td><td class="c g">7,75</td></tr>
</table>
</body></html>
